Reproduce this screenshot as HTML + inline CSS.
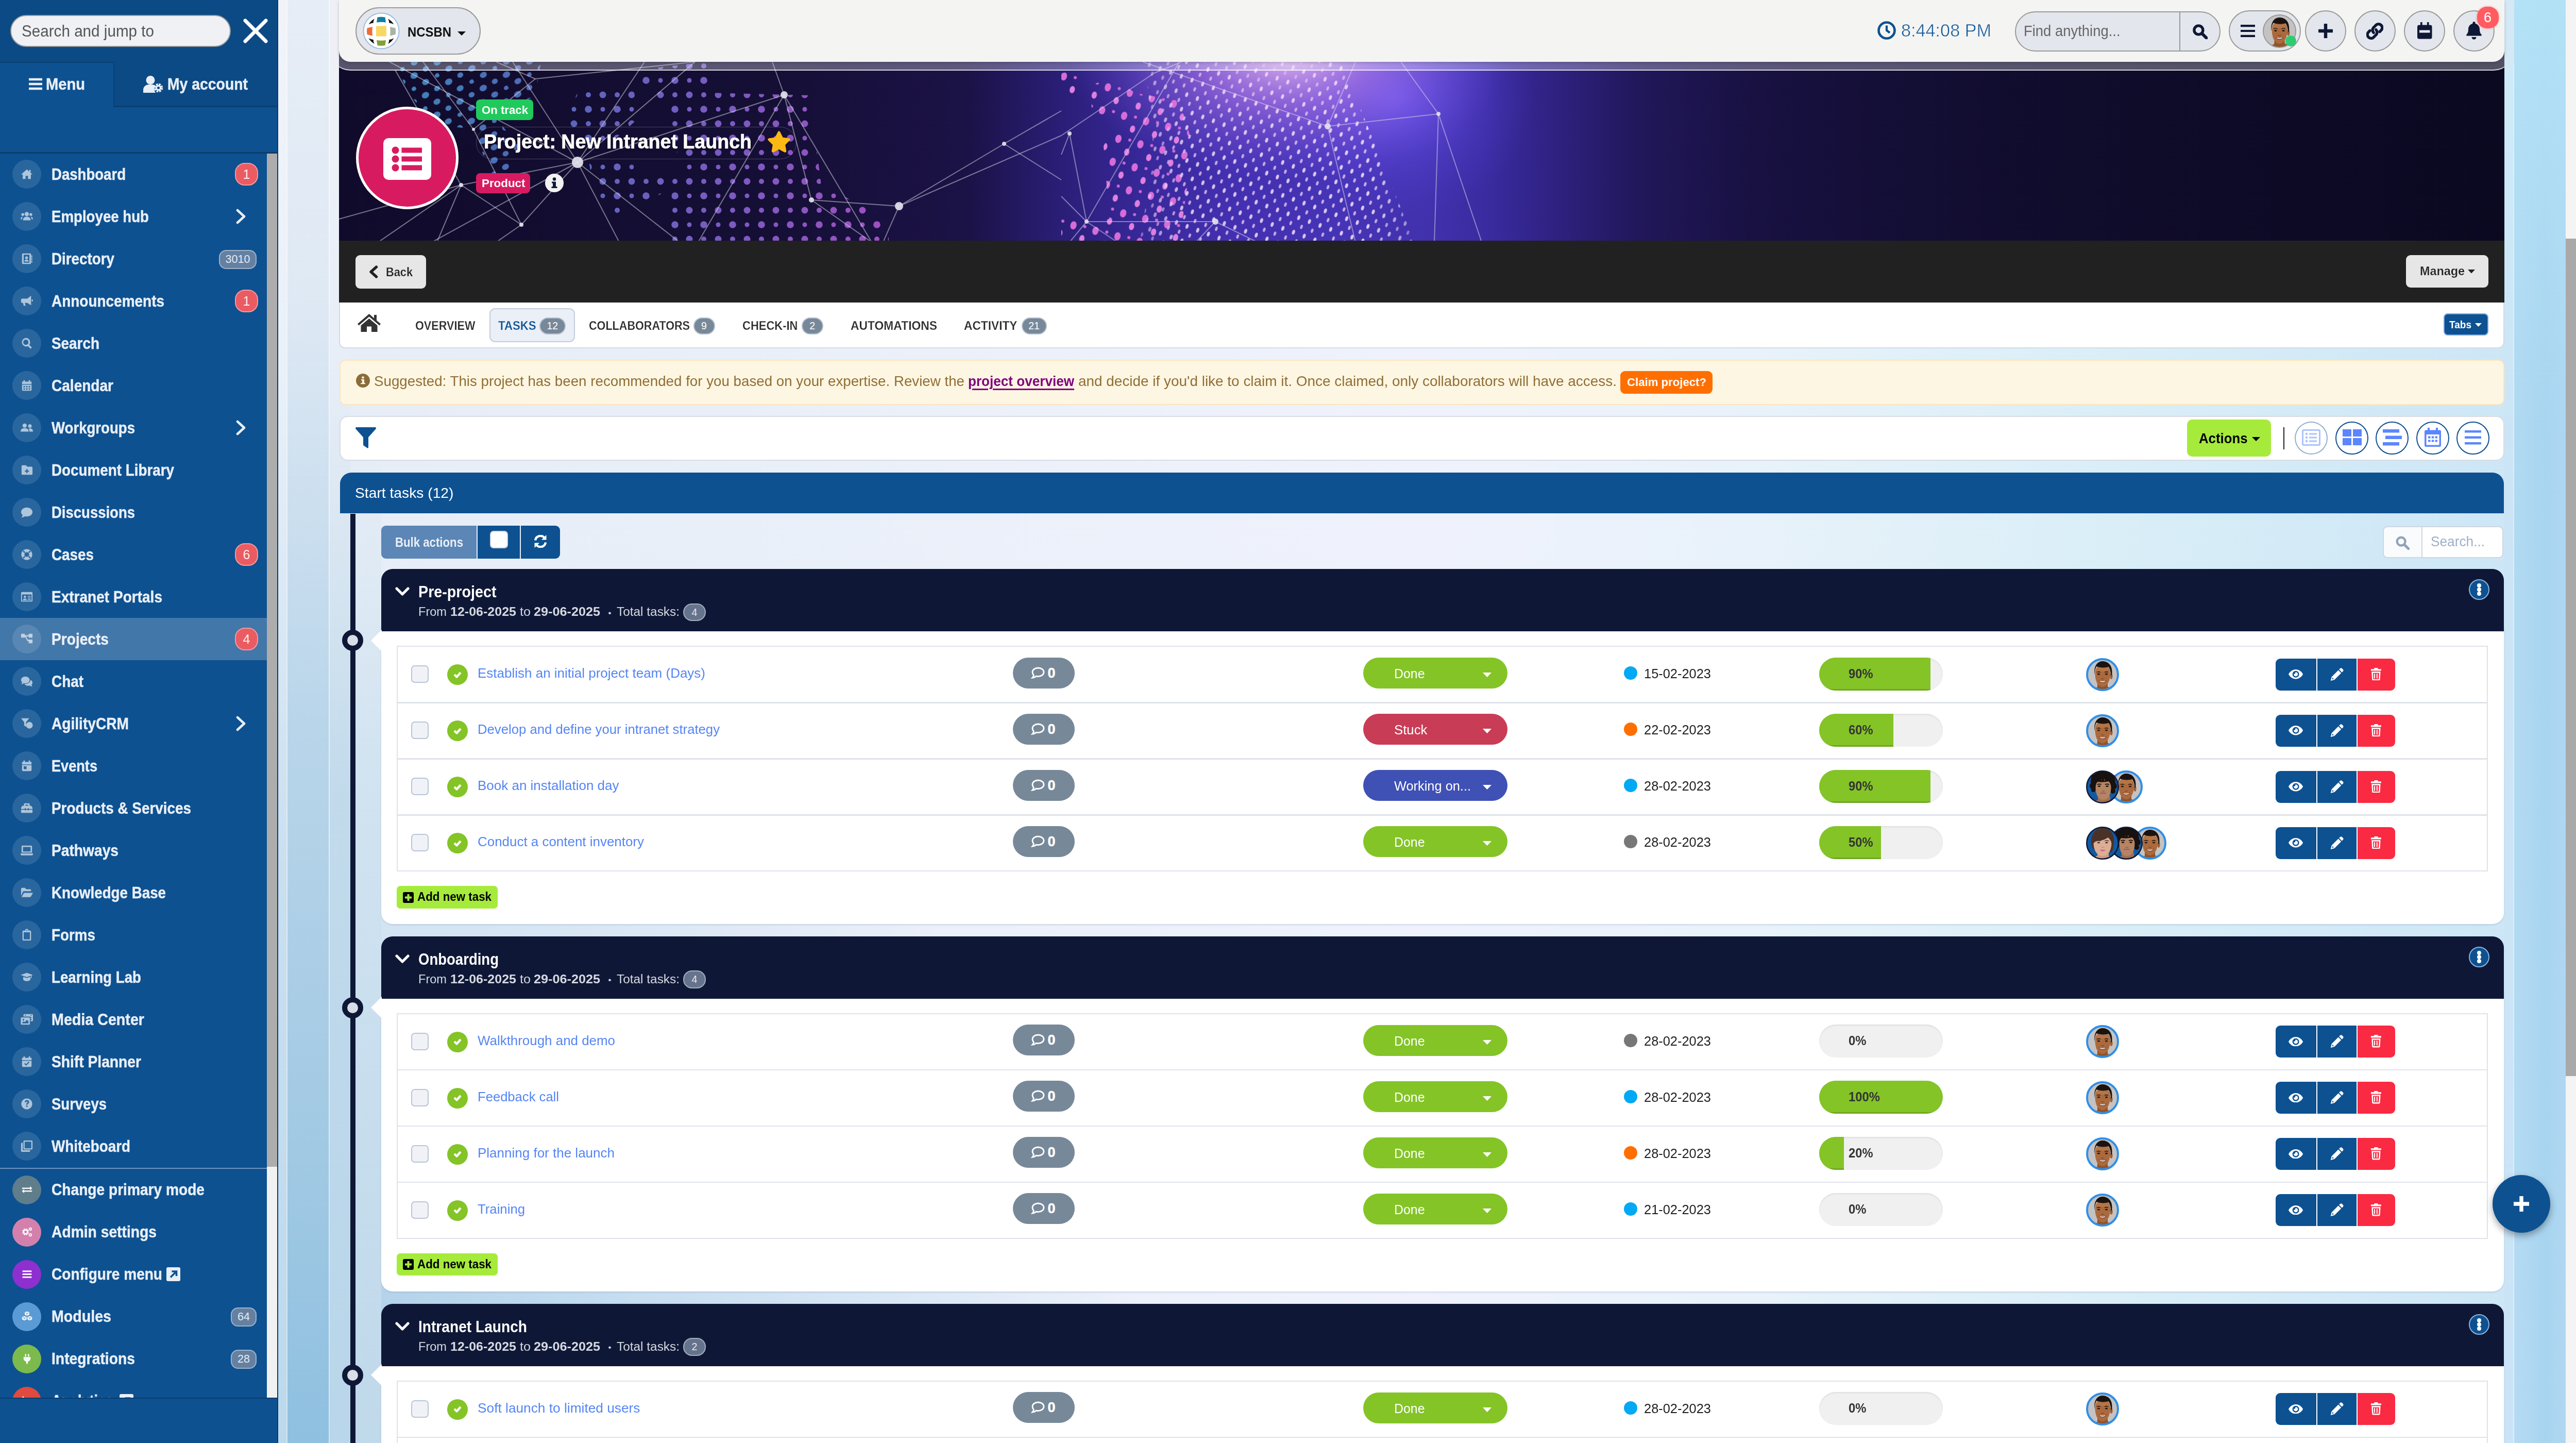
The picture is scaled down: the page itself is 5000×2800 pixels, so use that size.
<!DOCTYPE html>
<html lang="en"><head><meta charset="utf-8"><title>Project: New Intranet Launch</title>
<style>
*{box-sizing:border-box;margin:0;padding:0}
html,body{width:5000px;height:2800px;background:#cfe4f3;font-family:"Liberation Sans",sans-serif}
#root{position:relative;width:5000px;height:2800px;overflow:hidden;transform-origin:0 0}
#root div,#root svg,#root span.t{position:absolute}
span.t{white-space:nowrap;display:block}

</style></head><body>

<div id="root">
<div style="left:540px;top:0px;width:4460px;height:2800px;background:radial-gradient(ellipse 1700px 1500px at 0 100%,rgba(160,200,228,.95) 0,rgba(175,210,235,.6) 45%,rgba(190,215,235,0) 100%),linear-gradient(90deg,#e6edf6 0,#e9eff8 20%,#eff2fc 50%,#e8f2fa 64%,#d9eef7 80%,#cbe5f6 100%);"></div>
<div style="left:540px;top:0px;width:16px;height:2800px;background:linear-gradient(180deg,#f1f3f9 0,#eaf0f8 25%,#c9dff0 60%,#bcd9ec 100%);"></div>
<div style="left:556px;top:0px;width:84px;height:2800px;background:linear-gradient(180deg,#e6edf6 0,#dfe9f4 20%,#b9d5ea 50%,#a5cbe4 75%,#8fc0e0 100%);border-left:2px solid rgba(255,255,255,.6);border-right:2px solid rgba(255,255,255,.6);"></div>
<div style="left:640px;top:0px;width:40px;height:2800px;background:linear-gradient(180deg,#eff1f7 0,#e8eef7 25%,rgba(205,224,238,.9) 45%,rgba(192,217,235,.95) 55%,rgba(185,214,234,1) 100%);"></div>
<div style="left:680px;top:0px;width:60px;height:2800px;background:linear-gradient(180deg,rgba(239,241,247,0) 0,rgba(239,241,247,0) 30%,rgba(207,226,240,.8) 52%,rgba(194,218,235,.9) 100%);"></div>
<div style="left:4861px;top:0px;width:19px;height:2800px;background:linear-gradient(180deg,#cfeaf7 0,#cbe5f6 30%,#cbe3f6 100%);border-right:2px solid rgba(255,255,255,.35);"></div>
<div style="left:4880px;top:0px;width:100px;height:2800px;background:linear-gradient(180deg,rgba(179,226,246,.9) 0,rgba(170,214,240,.4) 30%,rgba(170,214,240,0) 100%),linear-gradient(90deg,#b6dbf3,#a8d4f0 60%,#b0d7f1);"></div>
<div style="left:4980px;top:0px;width:20px;height:2800px;background:#f4f4f4;"></div>
<div style="left:4980px;top:463px;width:20px;height:1625px;background:#a9a9a9;"></div>
<div style="left:0px;top:0px;width:540px;height:2800px;background:#0d5191;"></div>
<div style="left:0px;top:0px;width:540px;height:297px;background:#0b4a85;"></div>
<div style="left:0px;top:206px;width:540px;height:91px;background:#0d5191;"></div>
<div style="left:0px;top:120px;width:222px;height:88px;background:#0d5191;border-top:2px solid #0a3f72;border-right:2px solid #0a3f72;"></div>
<div style="left:221px;top:205px;width:319px;height:2.5px;background:#0a3f72;"></div>
<div style="left:0px;top:295px;width:540px;height:3px;background:#0a3d6e;"></div>
<div style="left:538px;top:0px;width:2px;height:2800px;background:#0a3d6e;"></div>
<div style="left:20px;top:29px;width:428px;height:62px;background:#f0f1f5;border:2px solid #9a9a9a;border-radius:31px;"></div>
<span class="t" style="top:44.5px;font-size:31px;line-height:31px;color:#555;transform:scaleX(0.9560);transform-origin:0 50%;left:42px;">Search and jump to</span>
<svg style="left:472px;top:36px;" width="48" height="48" viewBox="0 0 48 48"><path d="M4 4L44 44M44 4L4 44" stroke="#fff" stroke-width="7" stroke-linecap="round"/></svg>
<svg style="left:56px;top:151px;" width="26" height="24" viewBox="0 0 26 24"><path d="M0 3h26M0 12h26M0 21h26" stroke="#e8eef6" stroke-width="4.4"/></svg>
<span class="t" style="top:148.25px;font-size:30.5px;line-height:30.5px;color:#e8eef6;font-weight:700;transform:scaleX(0.9543);transform-origin:0 50%;left:89px;-webkit-text-stroke:.45px #e8eef6;">Menu</span>
<svg style="left:278px;top:147px;" width="40" height="33" viewBox="0 0 40 33"><circle cx="14" cy="8.5" r="8.5" fill="#e8eef6"/><path d="M0 33v-5c0-7 5-11 11-11h6c3 0 5 1 7 2.5c-3 3-3.5 9 0 13.5z" fill="#e8eef6"/><circle cx="29.5" cy="23.5" r="6.5" fill="none" stroke="#e8eef6" stroke-width="4.5" stroke-dasharray="3.4 1.7"/><circle cx="29.5" cy="23.5" r="4" fill="none" stroke="#e8eef6" stroke-width="3"/></svg>
<span class="t" style="top:148.25px;font-size:30.5px;line-height:30.5px;color:#e8eef6;font-weight:700;transform:scaleX(0.9298);transform-origin:0 50%;left:325px;-webkit-text-stroke:.45px #e8eef6;">My account</span>
<div style="left:518px;top:298px;width:20px;height:2414px;background:#f1f1f1;"></div>
<div style="left:518px;top:298px;width:20px;height:1966px;background:#adadad;"></div>
<div style="left:24px;top:310px;width:56px;height:56px;background:rgba(255,255,255,.12);border-radius:50%;"></div>
<svg style="left:40px;top:326px;" width="24" height="24" viewBox="0 0 26 26"><g fill="#fff" opacity="0.62"><path d="M13 3L1 13.5h3.5V23h6v-6.5h5V23h6v-9.5H25L21 10V4h-3v3.4z"/></g></svg>
<span class="t" style="top:322.75px;font-size:30.5px;line-height:30.5px;color:#e9eff7;font-weight:700;transform:scaleX(0.9039);transform-origin:0 50%;left:100px;-webkit-text-stroke:.45px #e9eff7;">Dashboard</span>
<div style="left:456px;top:316px;width:45px;height:44px;background:#ea5b62;border:2px solid #f19aa0;border-radius:19px;"></div>
<span class="t" style="top:326px;font-size:25px;line-height:25px;color:#fde9ea;left:478.5px;transform:translateX(-50%);">1</span>
<div style="left:24px;top:392px;width:56px;height:56px;background:rgba(255,255,255,.12);border-radius:50%;"></div>
<svg style="left:40px;top:408px;" width="24" height="24" viewBox="0 0 26 26"><g fill="#fff" opacity="0.62"><circle cx="13" cy="8" r="4.5"/><path d="M5 21c0-5 3-7.5 8-7.5s8 2.5 8 7.5z"/><circle cx="4.5" cy="9" r="3"/><circle cx="21.5" cy="9" r="3"/><path d="M0 19c0-3.5 2-5.5 5-5.5-1.5 1.5-2 3.5-2 5.5zM26 19c0-3.5-2-5.5-5-5.5 1.5 1.5 2 3.5 2 5.5z"/></g></svg>
<span class="t" style="top:404.75px;font-size:30.5px;line-height:30.5px;color:#e9eff7;font-weight:700;transform:scaleX(0.9067);transform-origin:0 50%;left:100px;-webkit-text-stroke:.45px #e9eff7;">Employee hub</span>
<svg style="left:457px;top:405px;" width="22" height="30" viewBox="0 0 22 30"><path d="M4 3l13 12L4 27" fill="none" stroke="#e9eff7" stroke-width="4.6" stroke-linecap="round" stroke-linejoin="round"/></svg>
<div style="left:24px;top:474px;width:56px;height:56px;background:rgba(255,255,255,.12);border-radius:50%;"></div>
<svg style="left:40px;top:490px;" width="24" height="24" viewBox="0 0 26 26"><g fill="#fff" opacity="0.62"><path fill-rule="evenodd" d="M5 2h15a2 2 0 012 2v18a2 2 0 01-2 2H5a2 2 0 01-2-2V4a2 2 0 012-2zm1.5 2.5v17h12v-17zM12.5 8a3 3 0 110 6 3 3 0 010-6zm-4.5 11c0-3 2-4 4.5-4s4.5 1 4.5 4z"/><path d="M22.5 6h2v4h-2zM22.5 11.5h2v4h-2zM22.5 17h2v4h-2z"/></g></svg>
<span class="t" style="top:486.75px;font-size:30.5px;line-height:30.5px;color:#e9eff7;font-weight:700;transform:scaleX(0.9110);transform-origin:0 50%;left:100px;-webkit-text-stroke:.45px #e9eff7;">Directory</span>
<div style="left:425px;top:484.5px;width:73px;height:37px;background:#6580a0;border:2px solid #9db2ca;border-radius:14px;"></div>
<span class="t" style="top:492.75px;font-size:21.5px;line-height:21.5px;color:#e4ebf3;left:461.5px;transform:translateX(-50%);">3010</span>
<div style="left:24px;top:556px;width:56px;height:56px;background:rgba(255,255,255,.12);border-radius:50%;"></div>
<svg style="left:40px;top:572px;" width="24" height="24" viewBox="0 0 26 26"><g fill="#fff" opacity="0.62"><path d="M22 2v20l-8-5H9l1.5 6h-4L5 17H3a2 2 0 01-2-2v-5a2 2 0 012-2h11zM23.5 9.5a2.5 2.5 0 010 5z"/></g></svg>
<span class="t" style="top:568.75px;font-size:30.5px;line-height:30.5px;color:#e9eff7;font-weight:700;transform:scaleX(0.9166);transform-origin:0 50%;left:100px;-webkit-text-stroke:.45px #e9eff7;">Announcements</span>
<div style="left:456px;top:562px;width:45px;height:44px;background:#ea5b62;border:2px solid #f19aa0;border-radius:19px;"></div>
<span class="t" style="top:572px;font-size:25px;line-height:25px;color:#fde9ea;left:478.5px;transform:translateX(-50%);">1</span>
<div style="left:24px;top:638px;width:56px;height:56px;background:rgba(255,255,255,.12);border-radius:50%;"></div>
<svg style="left:40px;top:654px;" width="24" height="24" viewBox="0 0 26 26"><g fill="#fff" opacity="0.62"><path fill-rule="evenodd" d="M11 2a9 9 0 017.2 14.4l5.5 5.5-2.8 2.8-5.5-5.5A9 9 0 1111 2zm0 3.5a5.5 5.5 0 100 11 5.5 5.5 0 000-11z"/></g></svg>
<span class="t" style="top:650.75px;font-size:30.5px;line-height:30.5px;color:#e9eff7;font-weight:700;transform:scaleX(0.9141);transform-origin:0 50%;left:100px;-webkit-text-stroke:.45px #e9eff7;">Search</span>
<div style="left:24px;top:720px;width:56px;height:56px;background:rgba(255,255,255,.12);border-radius:50%;"></div>
<svg style="left:40px;top:736px;" width="24" height="24" viewBox="0 0 26 26"><g fill="#fff" opacity="0.62"><path fill-rule="evenodd" d="M3 5h3V2h3v3h8V2h3v3h3v5H3zm0 6.5h20V22a2 2 0 01-2 2H5a2 2 0 01-2-2zm3 2.5v3h3v-3zm5.5 0v3h3v-3zm5.5 0v3h3v-3zM6 19v3h3v-3zm5.5 0v3h3v-3zm5.5 0v3h3v-3z"/></g></svg>
<span class="t" style="top:732.75px;font-size:30.5px;line-height:30.5px;color:#e9eff7;font-weight:700;transform:scaleX(0.9193);transform-origin:0 50%;left:100px;-webkit-text-stroke:.45px #e9eff7;">Calendar</span>
<div style="left:24px;top:802px;width:56px;height:56px;background:rgba(255,255,255,.12);border-radius:50%;"></div>
<svg style="left:40px;top:818px;" width="24" height="24" viewBox="0 0 26 26"><g fill="#fff" opacity="0.62"><circle cx="8.5" cy="8.5" r="4.5"/><path d="M0 21c0-5 3-7 8.5-7s8.5 2 8.5 7z"/><circle cx="19.5" cy="9.5" r="3.7"/><path d="M18.5 21c0-3-.5-4.5-2-6 1-.5 2-.7 3-.7 4 0 6.5 2 6.5 6.7z"/></g></svg>
<span class="t" style="top:814.75px;font-size:30.5px;line-height:30.5px;color:#e9eff7;font-weight:700;transform:scaleX(0.9047);transform-origin:0 50%;left:100px;-webkit-text-stroke:.45px #e9eff7;">Workgroups</span>
<svg style="left:457px;top:815px;" width="22" height="30" viewBox="0 0 22 30"><path d="M4 3l13 12L4 27" fill="none" stroke="#e9eff7" stroke-width="4.6" stroke-linecap="round" stroke-linejoin="round"/></svg>
<div style="left:24px;top:884px;width:56px;height:56px;background:rgba(255,255,255,.12);border-radius:50%;"></div>
<svg style="left:40px;top:900px;" width="24" height="24" viewBox="0 0 26 26"><g fill="#fff" opacity="0.62"><path fill-rule="evenodd" d="M2 5a2 2 0 012-2h7l3 3h9a2 2 0 012 2v13a2 2 0 01-2 2H4a2 2 0 01-2-2zm10 6v3H9v2.5h3v3h2.5v-3h3V14h-3v-3z"/></g></svg>
<span class="t" style="top:896.75px;font-size:30.5px;line-height:30.5px;color:#e9eff7;font-weight:700;transform:scaleX(0.9119);transform-origin:0 50%;left:100px;-webkit-text-stroke:.45px #e9eff7;">Document Library</span>
<div style="left:24px;top:966px;width:56px;height:56px;background:rgba(255,255,255,.12);border-radius:50%;"></div>
<svg style="left:40px;top:982px;" width="24" height="24" viewBox="0 0 26 26"><g fill="#fff" opacity="0.62"><path d="M13 3c6.6 0 12 4.3 12 9.5S19.6 22 13 22c-1.5 0-3-.2-4.3-.6C7 22.8 4.5 24 1.5 24c1.5-1.5 2.5-3.3 2.8-5C2.3 17.3 1 15 1 12.5 1 7.3 6.4 3 13 3z"/></g></svg>
<span class="t" style="top:978.75px;font-size:30.5px;line-height:30.5px;color:#e9eff7;font-weight:700;transform:scaleX(0.9016);transform-origin:0 50%;left:100px;-webkit-text-stroke:.45px #e9eff7;">Discussions</span>
<div style="left:24px;top:1048px;width:56px;height:56px;background:rgba(255,255,255,.12);border-radius:50%;"></div>
<svg style="left:40px;top:1064px;" width="24" height="24" viewBox="0 0 26 26"><g fill="#fff" opacity="0.62"><path fill-rule="evenodd" d="M13 1.5a11.5 11.5 0 110 23 11.5 11.5 0 010-23zm0 6.5a5 5 0 100 10 5 5 0 000-10zM6.5 4.5l3.5 3.5a6 6 0 00-2 2L4.5 6.5zM19.5 4.5l2 2L18 10a6 6 0 00-2-2zM4.5 19.5L8 16a6 6 0 002 2l-3.5 3.5zM21.5 19.5l-2 2L16 18a6 6 0 002-2z" /></g></svg>
<span class="t" style="top:1060.75px;font-size:30.5px;line-height:30.5px;color:#e9eff7;font-weight:700;transform:scaleX(0.9122);transform-origin:0 50%;left:100px;-webkit-text-stroke:.45px #e9eff7;">Cases</span>
<div style="left:456px;top:1054px;width:45px;height:44px;background:#ea5b62;border:2px solid #f19aa0;border-radius:19px;"></div>
<span class="t" style="top:1064px;font-size:25px;line-height:25px;color:#fde9ea;left:478.5px;transform:translateX(-50%);">6</span>
<div style="left:24px;top:1130px;width:56px;height:56px;background:rgba(255,255,255,.12);border-radius:50%;"></div>
<svg style="left:40px;top:1146px;" width="24" height="24" viewBox="0 0 26 26"><g fill="#fff" opacity="0.62"><path fill-rule="evenodd" d="M3 3h20a2 2 0 012 2v16a2 2 0 01-2 2H3a2 2 0 01-2-2V5a2 2 0 012-2zm0 5v13h20V8zm6 2.5a2.5 2.5 0 110 5 2.5 2.5 0 010-5zM5 20c0-2.5 1.5-3.5 4-3.5s4 1 4 3.5zM15 11h6v1.8h-6zm0 3.5h6v1.8h-6zm0 3.5h6v1.8h-6z"/></g></svg>
<span class="t" style="top:1142.75px;font-size:30.5px;line-height:30.5px;color:#e9eff7;font-weight:700;transform:scaleX(0.9191);transform-origin:0 50%;left:100px;-webkit-text-stroke:.45px #e9eff7;">Extranet Portals</span>
<div style="left:0px;top:1199px;width:518px;height:82px;background:rgba(255,255,255,.22);"></div>
<div style="left:24px;top:1212px;width:56px;height:56px;background:rgba(255,255,255,.12);border-radius:50%;"></div>
<svg style="left:40px;top:1228px;" width="24" height="24" viewBox="0 0 26 26"><g fill="#fff" opacity="0.62"><path d="M1 2h8v3h8V2h8v8h-8V7.5h-5.5l4 7H17V14h8v8h-8v-4.5h-2.5L9.5 8.5V10H1z"/></g></svg>
<span class="t" style="top:1224.75px;font-size:30.5px;line-height:30.5px;color:#e9eff7;font-weight:700;transform:scaleX(0.9221);transform-origin:0 50%;left:100px;-webkit-text-stroke:.45px #e9eff7;">Projects</span>
<div style="left:456px;top:1218px;width:45px;height:44px;background:#ea5b62;border:2px solid #f19aa0;border-radius:19px;"></div>
<span class="t" style="top:1228px;font-size:25px;line-height:25px;color:#fde9ea;left:478.5px;transform:translateX(-50%);">4</span>
<div style="left:24px;top:1294px;width:56px;height:56px;background:rgba(255,255,255,.12);border-radius:50%;"></div>
<svg style="left:40px;top:1310px;" width="24" height="24" viewBox="0 0 26 26"><g fill="#fff" opacity="0.62"><path d="M10 3c5 0 9 3.2 9 7.2s-4 7.2-9 7.2c-1 0-2-.1-3-.4C5.5 18.2 3.5 19 1 19c1.3-1.2 2-2.5 2.3-3.8C1.8 13.8 1 12 1 10.2 1 6.2 5 3 10 3z"/><path d="M21 10c2.5 1.2 4 3.3 4 5.7 0 1.8-.8 3.4-2.2 4.7.3 1.3 1 2.5 2.2 3.6-2.5 0-4.5-.7-6-2-1 .3-2 .4-3 .4-3.5 0-6.5-1.5-8-3.8 6.5.4 12.5-3 13-8.6z"/></g></svg>
<span class="t" style="top:1306.75px;font-size:30.5px;line-height:30.5px;color:#e9eff7;font-weight:700;transform:scaleX(0.9147);transform-origin:0 50%;left:100px;-webkit-text-stroke:.45px #e9eff7;">Chat</span>
<div style="left:24px;top:1376px;width:56px;height:56px;background:rgba(255,255,255,.12);border-radius:50%;"></div>
<svg style="left:40px;top:1392px;" width="24" height="24" viewBox="0 0 26 26"><g fill="#fff" opacity="0.62"><path d="M1 2h17l-6.5 8v10l-4-3v-7z"/><circle cx="18.5" cy="16.5" r="7"/></g></svg>
<span class="t" style="top:1388.75px;font-size:30.5px;line-height:30.5px;color:#e9eff7;font-weight:700;transform:scaleX(0.9221);transform-origin:0 50%;left:100px;-webkit-text-stroke:.45px #e9eff7;">AgilityCRM</span>
<svg style="left:457px;top:1389px;" width="22" height="30" viewBox="0 0 22 30"><path d="M4 3l13 12L4 27" fill="none" stroke="#e9eff7" stroke-width="4.6" stroke-linecap="round" stroke-linejoin="round"/></svg>
<div style="left:24px;top:1458px;width:56px;height:56px;background:rgba(255,255,255,.12);border-radius:50%;"></div>
<svg style="left:40px;top:1474px;" width="24" height="24" viewBox="0 0 26 26"><g fill="#fff" opacity="0.62"><path fill-rule="evenodd" d="M3 5h3V2h3v3h8V2h3v3h3v5H3zm0 6.5h20V22a2 2 0 01-2 2H5a2 2 0 01-2-2zm3.5 2.5v6h6v-6z"/></g></svg>
<span class="t" style="top:1470.75px;font-size:30.5px;line-height:30.5px;color:#e9eff7;font-weight:700;transform:scaleX(0.8897);transform-origin:0 50%;left:100px;-webkit-text-stroke:.45px #e9eff7;">Events</span>
<div style="left:24px;top:1540px;width:56px;height:56px;background:rgba(255,255,255,.12);border-radius:50%;"></div>
<svg style="left:40px;top:1556px;" width="24" height="24" viewBox="0 0 26 26"><g fill="#fff" opacity="0.62"><path fill-rule="evenodd" d="M9 3h8a2 2 0 012 2v3h3l3 4v3h-8v-2h-2v2h-4v-2H9v2H1v-3l3-4h3V5a2 2 0 012-2zm1 3v2h6V6zM1 16.5h8V18h2v-1.5h4V18h2v-1.5h8V22a1 1 0 01-1 1H2a1 1 0 01-1-1z"/></g></svg>
<span class="t" style="top:1552.75px;font-size:30.5px;line-height:30.5px;color:#e9eff7;font-weight:700;transform:scaleX(0.9135);transform-origin:0 50%;left:100px;-webkit-text-stroke:.45px #e9eff7;">Products &amp; Services</span>
<div style="left:24px;top:1622px;width:56px;height:56px;background:rgba(255,255,255,.12);border-radius:50%;"></div>
<svg style="left:40px;top:1638px;" width="24" height="24" viewBox="0 0 26 26"><g fill="#fff" opacity="0.62"><path fill-rule="evenodd" d="M4 3h18a2 2 0 012 2v13H2V5a2 2 0 012-2zm1 3v9.5h16V6zM0 19.5h26V21a2.5 2.5 0 01-2.5 2.5h-21A2.5 2.5 0 010 21z"/></g></svg>
<span class="t" style="top:1634.75px;font-size:30.5px;line-height:30.5px;color:#e9eff7;font-weight:700;transform:scaleX(0.9238);transform-origin:0 50%;left:100px;-webkit-text-stroke:.45px #e9eff7;">Pathways</span>
<div style="left:24px;top:1704px;width:56px;height:56px;background:rgba(255,255,255,.12);border-radius:50%;"></div>
<svg style="left:40px;top:1720px;" width="24" height="24" viewBox="0 0 26 26"><g fill="#fff" opacity="0.62"><path d="M1 20V5a2 2 0 012-2h6l3 3h8a2 2 0 012 2v2H7.5a3 3 0 00-2.6 1.5zM2 22.5l4.5-8A2 2 0 018.2 13.5H26l-4.5 8a2 2 0 01-1.7 1z"/></g></svg>
<span class="t" style="top:1716.75px;font-size:30.5px;line-height:30.5px;color:#e9eff7;font-weight:700;transform:scaleX(0.9096);transform-origin:0 50%;left:100px;-webkit-text-stroke:.45px #e9eff7;">Knowledge Base</span>
<div style="left:24px;top:1786px;width:56px;height:56px;background:rgba(255,255,255,.12);border-radius:50%;"></div>
<svg style="left:40px;top:1802px;" width="24" height="24" viewBox="0 0 26 26"><g fill="#fff" opacity="0.62"><path fill-rule="evenodd" d="M6 4h3.5a3.5 3.5 0 017 0H20a2 2 0 012 2v17a2 2 0 01-2 2H6a2 2 0 01-2-2V6a2 2 0 012-2zm7-1.2a1.2 1.2 0 100 2.4 1.2 1.2 0 000-2.4zM6.5 7.5v15h13v-15z"/></g></svg>
<span class="t" style="top:1798.75px;font-size:30.5px;line-height:30.5px;color:#e9eff7;font-weight:700;transform:scaleX(0.9118);transform-origin:0 50%;left:100px;-webkit-text-stroke:.45px #e9eff7;">Forms</span>
<div style="left:24px;top:1868px;width:56px;height:56px;background:rgba(255,255,255,.12);border-radius:50%;"></div>
<svg style="left:40px;top:1884px;" width="24" height="24" viewBox="0 0 26 26"><g fill="#fff" opacity="0.62"><path d="M13 4l13 4.5-3 1v6h-1.5v-5.5L13 13 0 8.5zM5.5 12.5L13 15l7.5-2.5V18c0 2-3.5 3.5-7.5 3.5S5.5 20 5.5 18z"/></g></svg>
<span class="t" style="top:1880.75px;font-size:30.5px;line-height:30.5px;color:#e9eff7;font-weight:700;transform:scaleX(0.9086);transform-origin:0 50%;left:100px;-webkit-text-stroke:.45px #e9eff7;">Learning Lab</span>
<div style="left:24px;top:1950px;width:56px;height:56px;background:rgba(255,255,255,.12);border-radius:50%;"></div>
<svg style="left:40px;top:1966px;" width="24" height="24" viewBox="0 0 26 26"><g fill="#fff" opacity="0.62"><path fill-rule="evenodd" d="M8 2h16a2 2 0 012 2v11a2 2 0 01-2 2h-3V9a2 2 0 00-2-2H6V4a2 2 0 012-2zm1 1.5v2h2v-2zm12 0v2h2v-2zm0 4.5v2h2V8zm0 4.5v2h2v-2zM2 9h16a1.5 1.5 0 011.5 1.5v12A1.5 1.5 0 0118 24H2a1.5 1.5 0 01-1.5-1.5v-12A1.5 1.5 0 012 9zm1.5 12.5h13V17l-3-3-5 5-2-2-3 3zM6 12a1.8 1.8 0 100 3.6A1.8 1.8 0 006 12z"/></g></svg>
<span class="t" style="top:1962.75px;font-size:30.5px;line-height:30.5px;color:#e9eff7;font-weight:700;transform:scaleX(0.9398);transform-origin:0 50%;left:100px;-webkit-text-stroke:.45px #e9eff7;">Media Center</span>
<div style="left:24px;top:2032px;width:56px;height:56px;background:rgba(255,255,255,.12);border-radius:50%;"></div>
<svg style="left:40px;top:2048px;" width="24" height="24" viewBox="0 0 26 26"><g fill="#fff" opacity="0.62"><path fill-rule="evenodd" d="M3 5h3V2h3v3h8V2h3v3h3v5H3zm0 6.5h20V22a2 2 0 01-2 2H5a2 2 0 01-2-2zm15.5 3L17 13l-5.5 5.5L9 16l-1.5 1.5 4 4z"/></g></svg>
<span class="t" style="top:2044.75px;font-size:30.5px;line-height:30.5px;color:#e9eff7;font-weight:700;transform:scaleX(0.9250);transform-origin:0 50%;left:100px;-webkit-text-stroke:.45px #e9eff7;">Shift Planner</span>
<div style="left:24px;top:2114px;width:56px;height:56px;background:rgba(255,255,255,.12);border-radius:50%;"></div>
<svg style="left:40px;top:2130px;" width="24" height="24" viewBox="0 0 26 26"><g fill="#fff" opacity="0.62"><path fill-rule="evenodd" d="M13 1.5a11.5 11.5 0 110 23 11.5 11.5 0 010-23zm-4.3 8h3c0-1 .6-1.5 1.5-1.5s1.5.5 1.5 1.3c0 1.7-3 2-3 5.2h3c0-2 3.3-2.5 3.3-5.5 0-2.5-2-4-4.8-4-2.7 0-4.5 1.7-4.5 4.5zm3 6.8v3h3v-3z"/></g></svg>
<span class="t" style="top:2126.75px;font-size:30.5px;line-height:30.5px;color:#e9eff7;font-weight:700;transform:scaleX(0.9014);transform-origin:0 50%;left:100px;-webkit-text-stroke:.45px #e9eff7;">Surveys</span>
<div style="left:24px;top:2196px;width:56px;height:56px;background:rgba(255,255,255,.12);border-radius:50%;"></div>
<svg style="left:40px;top:2212px;" width="24" height="24" viewBox="0 0 26 26"><g fill="#fff" opacity="0.62"><path fill-rule="evenodd" d="M8 1h15a2 2 0 012 2v15a2 2 0 01-2 2H8a2 2 0 01-2-2V3a2 2 0 012-2zm.5 2.5v14h14v-14zM1 8a2 2 0 012-2h1.5v15.5H20V23a2 2 0 01-2 2H3a2 2 0 01-2-2z"/></g></svg>
<span class="t" style="top:2208.75px;font-size:30.5px;line-height:30.5px;color:#e9eff7;font-weight:700;transform:scaleX(0.9121);transform-origin:0 50%;left:100px;-webkit-text-stroke:.45px #e9eff7;">Whiteboard</span>
<div style="left:0px;top:2265.5px;width:518px;height:2.5px;background:#6e93bf;"></div>
<div style="left:24px;top:2280.5px;width:56px;height:56px;background:#607d8b;border-radius:50%;"></div>
<svg style="left:41.5px;top:2298px;" width="21" height="21" viewBox="0 0 26 26"><g fill="#fff" opacity="0.95"><path d="M1 8h19V4.5L25.5 9.5 20 14.5V11H1zM25 18H6v3.5L.5 16.5 6 11.5V15h19z"/></g></svg>
<span class="t" style="top:2293.25px;font-size:30.5px;line-height:30.5px;color:#e9eff7;font-weight:700;transform:scaleX(0.9223);transform-origin:0 50%;left:100px;-webkit-text-stroke:.45px #e9eff7;">Change primary mode</span>
<div style="left:24px;top:2362.5px;width:56px;height:56px;background:#d381ac;border-radius:50%;"></div>
<svg style="left:41.5px;top:2380px;" width="21" height="21" viewBox="0 0 26 26"><g fill="#fff" opacity="0.95"><path fill-rule="evenodd" d="M9.5 6l1.5.3.8-1.8 2.4 1-.6 1.9 1.2 1.2 1.9-.6 1 2.4-1.8.8.3 1.5-.3 1.5 1.8.8-1 2.4-1.9-.6-1.2 1.2.6 1.9-2.4 1-.8-1.8-1.5.3-1.5-.3-.8 1.8-2.4-1 .6-1.9-1.2-1.2-1.9.6-1-2.4 1.8-.8L2.8 12.7l.3-1.5-1.8-.8 1-2.4 1.9.6 1.2-1.2-.6-1.9 2.4-1 .8 1.8zm0 3.5a3.2 3.2 0 100 6.4 3.2 3.2 0 000-6.4z"/><circle cx="21" cy="6" r="3.8"/><circle cx="21" cy="20" r="3.8"/><circle cx="21" cy="6" r="1.5" fill="#d381ac"/><circle cx="21" cy="20" r="1.5" fill="#d381ac"/></g></svg>
<span class="t" style="top:2375.25px;font-size:30.5px;line-height:30.5px;color:#e9eff7;font-weight:700;transform:scaleX(0.9260);transform-origin:0 50%;left:100px;-webkit-text-stroke:.45px #e9eff7;">Admin settings</span>
<div style="left:24px;top:2444.5px;width:56px;height:56px;background:#8e2fd0;border-radius:50%;"></div>
<svg style="left:41.5px;top:2462px;" width="21" height="21" viewBox="0 0 26 26"><g fill="#fff" opacity="0.95"><path d="M2 4h22v3.6H2zM2 11.2h22v3.6H2zM2 18.4h22V22H2z"/></g></svg>
<span class="t" style="top:2457.25px;font-size:30.5px;line-height:30.5px;color:#e9eff7;font-weight:700;transform:scaleX(0.9194);transform-origin:0 50%;left:100px;-webkit-text-stroke:.45px #e9eff7;">Configure menu</span>
<div style="left:24px;top:2526.5px;width:56px;height:56px;background:#5b9bd5;border-radius:50%;"></div>
<svg style="left:41.5px;top:2544px;" width="21" height="21" viewBox="0 0 26 26"><g fill="#fff" opacity="0.95"><path d="M13 1l5.5 2.2v5.6L13 11 7.5 8.8V3.2zM6.5 12l5.5 2.2v6L6.5 22.5 1 20.2v-6zM19.5 12l5.5 2.2v6l-5.5 2.3-5.5-2.3v-6z"/><path d="M13 5.8l3.5-1.4M13 5.8L9.5 4.4M13 5.8V9M6.5 16.8l3.5-1.4M6.5 16.8L3 15.4M6.5 16.8V20M19.5 16.8l3.5-1.4M19.5 16.8L16 15.4M19.5 16.8V20" stroke="#5b9bd5" stroke-width="1.3" fill="none"/></g></svg>
<span class="t" style="top:2539.25px;font-size:30.5px;line-height:30.5px;color:#e9eff7;font-weight:700;transform:scaleX(0.9377);transform-origin:0 50%;left:100px;-webkit-text-stroke:.45px #e9eff7;">Modules</span>
<div style="left:448px;top:2537px;width:50px;height:37px;background:#6580a0;border:2px solid #9db2ca;border-radius:14px;"></div>
<span class="t" style="top:2545.25px;font-size:21.5px;line-height:21.5px;color:#e4ebf3;left:473px;transform:translateX(-50%);">64</span>
<div style="left:24px;top:2608.5px;width:56px;height:56px;background:#7cba4e;border-radius:50%;"></div>
<svg style="left:41.5px;top:2626px;" width="21" height="21" viewBox="0 0 26 26"><g fill="#fff" opacity="0.95"><path d="M8 1.5h3V8H8zM15 1.5h3V8h-3zM4.5 9h17v3c0 4-2.5 7-6.5 7.8V25h-4v-5.2C7 19 4.5 16 4.5 12z"/></g></svg>
<span class="t" style="top:2621.25px;font-size:30.5px;line-height:30.5px;color:#e9eff7;font-weight:700;transform:scaleX(0.9281);transform-origin:0 50%;left:100px;-webkit-text-stroke:.45px #e9eff7;">Integrations</span>
<div style="left:448px;top:2619px;width:50px;height:37px;background:#6580a0;border:2px solid #9db2ca;border-radius:14px;"></div>
<span class="t" style="top:2627.25px;font-size:21.5px;line-height:21.5px;color:#e4ebf3;left:473px;transform:translateX(-50%);">28</span>
<div style="left:24px;top:2690.5px;width:56px;height:56px;background:#e04a3f;border-radius:50%;"></div>
<svg style="left:41.5px;top:2708px;" width="21" height="21" viewBox="0 0 26 26"><g fill="#fff" opacity="0.95"><path d="M2 2h3v19h19v3H2zM8 12h3v7H8zM13 7h3v12h-3zM18 10h3v9h-3z"/></g></svg>
<span class="t" style="top:2703.25px;font-size:30.5px;line-height:30.5px;color:#e9eff7;font-weight:700;transform:scaleX(0.8848);transform-origin:0 50%;left:100px;-webkit-text-stroke:.45px #e9eff7;">Analytics</span>
<svg style="left:323px;top:2459px;" width="27" height="27" viewBox="0 0 27 27"><rect x="0" y="0" width="27" height="27" rx="3" fill="#e9eff7"/><path d="M8 19.5L18 9.5M10.5 8h9v9" stroke="#0d5191" stroke-width="3.6" fill="none"/></svg>
<svg style="left:232px;top:2705px;" width="27" height="27" viewBox="0 0 27 27"><rect x="0" y="0" width="27" height="27" rx="3" fill="#e9eff7"/><path d="M8 19.5L18 9.5M10.5 8h9v9" stroke="#0d5191" stroke-width="3.6" fill="none"/></svg>
<div style="left:0px;top:2712px;width:538px;height:88px;background:#0d5191;border-top:2px solid #0a3d6e;"></div>
<svg style="left:658px;top:120px;" width="4203" height="347" viewBox="0 0 4203 347"><defs><linearGradient id="bg0" x1="0" x2="1" y1="0" y2="0"><stop offset="0" stop-color="#100b2b"/><stop offset=".2" stop-color="#150f36"/><stop offset=".29" stop-color="#1b1246"/><stop offset=".334" stop-color="#2a1e78"/><stop offset=".372" stop-color="#38289a"/><stop offset=".411" stop-color="#4330b0"/><stop offset=".463" stop-color="#4534b6"/><stop offset=".504" stop-color="#4131ac"/><stop offset=".53" stop-color="#3a2ba0"/><stop offset=".562" stop-color="#2e2180"/><stop offset=".6" stop-color="#21175a"/><stop offset=".652" stop-color="#181142"/><stop offset=".726" stop-color="#130e34"/><stop offset=".795" stop-color="#100c2c"/><stop offset=".9" stop-color="#0d0a26"/><stop offset="1" stop-color="#0a0920"/></linearGradient><radialGradient id="glow" cx="0" cy="0" r="1" gradientUnits="userSpaceOnUse" gradientTransform="translate(1840 -20) scale(430 250)"><stop offset="0" stop-color="#f0c4f4" stop-opacity=".95"/><stop offset=".4" stop-color="#b07ae8" stop-opacity=".65"/><stop offset="1" stop-color="#6a4ad8" stop-opacity="0"/></radialGradient><radialGradient id="glow2" cx="0" cy="0" r="1" gradientUnits="userSpaceOnUse" gradientTransform="translate(2050 70) scale(270 240)"><stop offset="0" stop-color="#6a55f0" stop-opacity=".95"/><stop offset="1" stop-color="#4a36c0" stop-opacity="0"/></radialGradient><linearGradient id="dcol" x1="0" x2="1055" y1="0" y2="0" gradientUnits="userSpaceOnUse"><stop offset=".1" stop-color="#4aa6dc"/><stop offset=".3" stop-color="#5a86d8"/><stop offset=".5" stop-color="#7a78e0"/><stop offset=".75" stop-color="#9a6ce4"/><stop offset="1" stop-color="#c060e0"/></linearGradient><pattern id="dp" width="56" height="56" patternUnits="userSpaceOnUse"><circle cx="8" cy="8" r="6.5" fill="#fff"/><circle cx="36" cy="8" r="5" fill="#fff"/><circle cx="8" cy="36" r="4.5" fill="#fff"/><circle cx="36" cy="36" r="6.8" fill="#fff"/></pattern><pattern id="db" width="52" height="44" patternUnits="userSpaceOnUse" patternTransform="rotate(-30)"><ellipse cx="9" cy="8" rx="7.5" ry="6" fill="#fff"/><ellipse cx="35" cy="8" rx="6" ry="5" fill="#fff"/><ellipse cx="22" cy="30" rx="7" ry="5.5" fill="#fff"/><ellipse cx="48" cy="30" rx="5" ry="4" fill="#fff"/></pattern><pattern id="dk" width="44" height="46" patternUnits="userSpaceOnUse" patternTransform="rotate(14)"><ellipse cx="8" cy="9" rx="6" ry="8" fill="#e070dc"/><ellipse cx="30" cy="30" rx="5" ry="7" fill="#e884e4"/><circle cx="30" cy="6" r="3" fill="#d868d8"/></pattern><pattern id="dw" width="22" height="30" patternUnits="userSpaceOnUse" patternTransform="rotate(20)"><ellipse cx="6" cy="7" rx="2.8" ry="4.8" fill="#e9d2f6"/><ellipse cx="17" cy="22" rx="2.4" ry="4.2" fill="#d4b2ee"/></pattern><linearGradient id="fade" x1="1500" x2="2090" y1="0" y2="0" gradientUnits="userSpaceOnUse"><stop offset="0" stop-color="#fff" stop-opacity=".25"/><stop offset=".25" stop-color="#fff" stop-opacity=".9"/><stop offset=".85" stop-color="#fff" stop-opacity=".95"/><stop offset="1" stop-color="#fff" stop-opacity=".5"/></linearGradient><mask id="mk1"><path fill="url(#db)" d="M109 0L392 0L381 65L305 109L348 163L327 229L294 218L261 131L180 120L131 54z"/><path fill="url(#dp)" d="M463 60L571 49L582 109L539 147L479 163L441 109zM484 185L571 190L577 261L544 299L495 261zM577 16L713 0L718 60L914 65L936 239L1067 305L1067 350L631 350L648 245L571 283L577 229L664 212L637 82L582 49z"/></mask><mask id="mk2"><rect width="4203" height="347" fill="url(#fade)"/></mask></defs><rect width="4203" height="347" fill="url(#bg0)"/><rect width="4203" height="347" fill="url(#glow2)"/><rect width="4203" height="347" fill="url(#glow)"/><rect width="1100" height="347" fill="url(#dcol)" mask="url(#mk1)" opacity=".8"/><path fill="url(#dk)" opacity=".95" d="M1402 22L1435 16L1446 71L1402 65zM1456 44L1511 33L1544 60L1631 76L1658 163L1631 350L1402 350L1402 305L1495 305L1484 163L1516 109L1462 98z"/><g mask="url(#mk2)"><path fill="url(#dw)" d="M1565 0L1946 0L2088 350L1554 350L1582 180z"/></g><path d="M463 195L864 64" stroke="#dddbe9" stroke-opacity=".5" stroke-width="2"/><path d="M463 195L691 0" stroke="#dddbe9" stroke-opacity=".5" stroke-width="2"/><path d="M463 195L593 0" stroke="#dddbe9" stroke-opacity=".5" stroke-width="2"/><path d="M463 195L98 0" stroke="#dddbe9" stroke-opacity=".5" stroke-width="2"/><path d="M463 195L237 239" stroke="#dddbe9" stroke-opacity=".5" stroke-width="2"/><path d="M463 195L354 316" stroke="#dddbe9" stroke-opacity=".5" stroke-width="2"/><path d="M463 195L544 350" stroke="#dddbe9" stroke-opacity=".5" stroke-width="2"/><path d="M463 195L661 350" stroke="#dddbe9" stroke-opacity=".5" stroke-width="2"/><path d="M463 195L337 0" stroke="#dddbe9" stroke-opacity=".5" stroke-width="2"/><path d="M463 195L180 350" stroke="#dddbe9" stroke-opacity=".5" stroke-width="2"/><path d="M864 64L917 268" stroke="#dddbe9" stroke-opacity=".5" stroke-width="2"/><path d="M864 64L841 0" stroke="#dddbe9" stroke-opacity=".5" stroke-width="2"/><path d="M864 64L1034 350" stroke="#dddbe9" stroke-opacity=".5" stroke-width="2"/><path d="M917 268L1087 280" stroke="#dddbe9" stroke-opacity=".5" stroke-width="2"/><path d="M1087 280L1291 159" stroke="#dddbe9" stroke-opacity=".5" stroke-width="2"/><path d="M1087 280L1402 143" stroke="#dddbe9" stroke-opacity=".5" stroke-width="2"/><path d="M1087 280L1056 350" stroke="#dddbe9" stroke-opacity=".5" stroke-width="2"/><path d="M917 268L1034 350" stroke="#dddbe9" stroke-opacity=".5" stroke-width="2"/><path d="M1291 159L1402 95" stroke="#dddbe9" stroke-opacity=".5" stroke-width="2"/><path d="M1291 159L1402 229" stroke="#dddbe9" stroke-opacity=".5" stroke-width="2"/><path d="M237 239L0 305" stroke="#dddbe9" stroke-opacity=".5" stroke-width="2"/><path d="M237 239L109 16" stroke="#dddbe9" stroke-opacity=".5" stroke-width="2"/><path d="M237 239L354 316" stroke="#dddbe9" stroke-opacity=".5" stroke-width="2"/><path d="M354 316L305 350" stroke="#dddbe9" stroke-opacity=".5" stroke-width="2"/><path d="M237 239L190 350" stroke="#dddbe9" stroke-opacity=".5" stroke-width="2"/><path d="M354 316L261 131" stroke="#dddbe9" stroke-opacity=".5" stroke-width="2"/><path d="M261 131L163 0" stroke="#dddbe9" stroke-opacity=".5" stroke-width="2"/><path d="M261 131L381 33" stroke="#dddbe9" stroke-opacity=".5" stroke-width="2"/><path d="M381 33L691 0" stroke="#dddbe9" stroke-opacity=".5" stroke-width="2"/><path d="M381 33L305 0" stroke="#dddbe9" stroke-opacity=".5" stroke-width="2"/><path d="M237 239L76 350" stroke="#dddbe9" stroke-opacity=".5" stroke-width="2"/><path d="M864 64L697 350" stroke="#dddbe9" stroke-opacity=".5" stroke-width="2"/><path d="M1402 143L1582 22" stroke="#ddd8ee" stroke-opacity=".5" stroke-width="2"/><path d="M1582 22L1636 0" stroke="#ddd8ee" stroke-opacity=".5" stroke-width="2"/><path d="M1418 139L1451 310" stroke="#ddd8ee" stroke-opacity=".5" stroke-width="2"/><path d="M1451 310L1701 310" stroke="#ddd8ee" stroke-opacity=".5" stroke-width="2"/><path d="M1701 310L1783 350" stroke="#ddd8ee" stroke-opacity=".5" stroke-width="2"/><path d="M1451 310L1402 261" stroke="#ddd8ee" stroke-opacity=".5" stroke-width="2"/><path d="M1701 310L1663 350" stroke="#ddd8ee" stroke-opacity=".5" stroke-width="2"/><path d="M1560 0L1919 125" stroke="#ddd8ee" stroke-opacity=".5" stroke-width="2"/><path d="M1919 125L2134 101" stroke="#ddd8ee" stroke-opacity=".5" stroke-width="2"/><path d="M2134 101L2218 350" stroke="#ddd8ee" stroke-opacity=".5" stroke-width="2"/><path d="M2134 101L2126 350" stroke="#ddd8ee" stroke-opacity=".5" stroke-width="2"/><path d="M1919 125L1973 0" stroke="#ddd8ee" stroke-opacity=".5" stroke-width="2"/><path d="M1919 125L1973 350" stroke="#ddd8ee" stroke-opacity=".5" stroke-width="2"/><path d="M2134 101L2061 0" stroke="#ddd8ee" stroke-opacity=".5" stroke-width="2"/><path d="M1631 0L1451 310" stroke="#ddd8ee" stroke-opacity=".5" stroke-width="2"/><path d="M1451 310L1511 350" stroke="#ddd8ee" stroke-opacity=".5" stroke-width="2"/><path d="M1418 139L1402 180" stroke="#ddd8ee" stroke-opacity=".5" stroke-width="2"/><path d="M1451 310L1418 350" stroke="#ddd8ee" stroke-opacity=".5" stroke-width="2"/><circle cx="463" cy="195" r="11" fill="#e4e2ec" fill-opacity=".92"/><circle cx="864" cy="64" r="7" fill="#e4e2ec" fill-opacity=".92"/><circle cx="1087" cy="280" r="8" fill="#e4e2ec" fill-opacity=".92"/><circle cx="917" cy="268" r="5" fill="#e4e2ec" fill-opacity=".92"/><circle cx="1291" cy="159" r="4" fill="#e4e2ec" fill-opacity=".92"/><circle cx="237" cy="239" r="4" fill="#e4e2ec" fill-opacity=".92"/><circle cx="354" cy="316" r="4" fill="#e4e2ec" fill-opacity=".92"/><circle cx="261" cy="131" r="3" fill="#e4e2ec" fill-opacity=".92"/><circle cx="1418" cy="139" r="4" fill="#e4e2ec" fill-opacity=".9"/><circle cx="1451" cy="310" r="4" fill="#e4e2ec" fill-opacity=".9"/><circle cx="1701" cy="310" r="6" fill="#e4e2ec" fill-opacity=".9"/><circle cx="1919" cy="125" r="6" fill="#e4e2ec" fill-opacity=".9"/><circle cx="2134" cy="101" r="4" fill="#e4e2ec" fill-opacity=".9"/></svg>
<div style="left:658px;top:92px;width:40px;height:30px;background:#100b2b;"></div>
<div style="left:4821px;top:92px;width:40px;height:30px;background:#0b0a25;"></div>
<div style="left:640px;top:0px;width:4240px;height:137px;background:rgba(235,235,245,.32);border-bottom:2px solid rgba(255,255,255,.75);border-radius:0 0 40px 40px;"></div>
<div style="left:640px;top:0px;width:18px;height:137px;background:#eef0f6;border-radius:0 0 0 30px;"></div>
<div style="left:4861px;top:0px;width:19px;height:137px;background:#d5e8f6;border-radius:0 0 30px 0;"></div>
<div style="left:658px;top:0px;width:4203px;height:120px;background:#f4f5f3;border-radius:0 0 22px 22px;box-shadow:0 2px 6px rgba(0,0,0,.18);"></div>
<div style="left:690px;top:14px;width:243px;height:91.5px;background:#e3e6ec;border:2px solid #9a9a9a;border-radius:46px;"></div>
<svg style="left:704px;top:24px;" width="72" height="72" viewBox="0 0 72 72"><circle cx="36" cy="36" r="34.5" fill="#fff" stroke="#9dbde0" stroke-width="2"/><rect x="26" y="26.5" width="20" height="20" rx="1.2" fill="#f7d862"/><path d="M28.5 9.5Q36 7.8 43.5 9.5L45 19.5Q36 18.2 27 19.5z" fill="#0f7f9f"/><path d="M27 54Q36 55.3 45 54L43.5 64Q36 65.7 28.5 64z" fill="#82a038"/><path d="M8.5 30.5L19 28Q17.8 36.5 19 45.5L8.5 43Q7.5 36.5 8.5 30.5z" fill="#ef6c35"/><path d="M63.5 30.5L53 28Q54.2 36.5 53 45.5L63.5 43Q64.5 36.5 63.5 30.5z" fill="#a9b3a4"/><path d="M22.7 12.4Q16 16 11.5 23.2Q16.5 20.8 20.6 20.6Q20.6 16.5 22.7 12.4z" fill="#111"/><g transform="translate(72 0) scale(-1 1)"><path d="M22.7 12.4Q16 16 11.5 23.2Q16.5 20.8 20.6 20.6Q20.6 16.5 22.7 12.4z" fill="#111"/></g><g transform="translate(0 73.5) scale(1 -1)"><path d="M22.7 12.4Q16 16 11.5 23.2Q16.5 20.8 20.6 20.6Q20.6 16.5 22.7 12.4z" fill="#111"/></g><g transform="translate(72 73.5) scale(-1 -1)"><path d="M22.7 12.4Q16 16 11.5 23.2Q16.5 20.8 20.6 20.6Q20.6 16.5 22.7 12.4z" fill="#111"/></g></svg>
<span class="t" style="top:48.75px;font-size:26.5px;line-height:26.5px;color:#111;font-weight:700;transform:scaleX(0.9020);transform-origin:0 50%;left:791px;">NCSBN</span>
<svg style="left:887.5px;top:61px;" width="16" height="8" viewBox="0 0 16 8"><path d="M0 0h16L8 8z" fill="#111"/></svg>
<svg style="left:3644px;top:40.5px;" width="36" height="36" viewBox="0 0 36 36"><circle cx="18" cy="18" r="15.5" fill="none" stroke="#0d5191" stroke-width="4.6"/><path d="M18 8.5V18l6 4.5" fill="none" stroke="#0d5191" stroke-width="4.2"/></svg>
<span class="t" style="top:41px;font-size:35px;line-height:35px;color:#16589a;transform:scaleX(0.9777);transform-origin:0 50%;left:3690px;-webkit-text-stroke:.6px #f4f5f3;">8:44:08 PM</span>
<div style="left:3910.5px;top:22px;width:399px;height:77.5px;background:#e3e6ec;border:2px solid #9a9a9a;border-radius:39px;"></div>
<div style="left:4230px;top:23px;width:2px;height:75.5px;background:#9a9a9a;"></div>
<span class="t" style="top:45.5px;font-size:29px;line-height:29px;color:#666;transform:scaleX(0.9456);transform-origin:0 50%;left:3927.7px;">Find anything...</span>
<svg style="left:4255.5px;top:46.5px;" width="29" height="29" viewBox="0 0 28 28"><circle cx="11" cy="11" r="8.2" fill="none" stroke="#0e1836" stroke-width="5.2"/><path d="M17.5 17.5L26 26" stroke="#0e1836" stroke-width="5.8" stroke-linecap="round"/></svg>
<div style="left:4326px;top:20px;width:139.5px;height:80px;background:#e3e6ec;border:2px solid #9a9a9a;border-radius:40px;"></div>
<svg style="left:4348.5px;top:48px;" width="28" height="24" viewBox="0 0 28 24"><path d="M0 2.2h28M0 12h28M0 21.8h28" stroke="#0e1836" stroke-width="4.2"/></svg>
<svg style="left:4391.5px;top:27.5px;" width="65" height="65" viewBox="0 0 64 64"><defs><clipPath id="av1"><circle cx="32" cy="32" r="31.02"/></clipPath></defs><g clip-path="url(#av1)"><rect width="64" height="64" fill="#c5c3c2"/><path d="M14 64c2-6 8-8 13-9h12c5 1 9 2 12 9z" fill="#9a5a30"/><path d="M22 50h20v12H22z" fill="#935429"/><ellipse cx="49" cy="35" rx="2.6" ry="6" fill="#9c5e36"/><path d="M17.5 30c0-10 6-17 14.5-17s15 7 15 17c0 6-1 12-3.5 17-2.5 5-7 9-11.5 9s-9-4-11.5-9c-2-5-3-11-3-17z" fill="#aa6a3e"/><path d="M21 20c3-5 18-5 22 0 1 3 1 6 0 8-6-3-16-3-22 0-1-2-1-5 0-8z" fill="#b97a4a" opacity=".7"/><path d="M16.5 32c-2-16 5-26 15.5-26 11 0 19 8 18.5 22 0 3-1 5-2 7-.5-9-2-14-5-18-6 2-17 2-23-1-2.5 3-3.5 8-4 16z" fill="#1b1310"/><path d="M21 27.5c2-1.2 5-1.2 7 0M36 27.5c2-1.2 5-1.2 7 0" stroke="#20120c" stroke-width="1.4" fill="none"/><ellipse cx="24.5" cy="31" rx="2.7" ry="1.5" fill="#2a1710"/><ellipse cx="39.5" cy="31" rx="2.7" ry="1.5" fill="#2a1710"/><path d="M29 39.5c2 1.3 4 1.3 6 0" stroke="#7d4524" stroke-width="1.4" fill="none"/><path d="M24.5 43c4 1.5 11 1.5 15 0-1 6.5-14 6.5-15 0z" fill="#7c3b2c"/><path d="M26 44c3.5 1 8.5 1 12 0-1.5 3.5-10.5 3.5-12 0z" fill="#f6f1ec"/></g><circle cx="32" cy="32" r="31.02" fill="none" stroke="#9a9a9a" stroke-width="1.97"/></svg>
<div style="left:4436px;top:69px;width:21px;height:21px;background:#2ecc71;border-radius:50%;"></div>
<div style="left:4474px;top:20px;width:80px;height:80px;background:#e3e6ec;border:2px solid #9a9a9a;border-radius:50%;"></div>
<div style="left:4569.5px;top:20px;width:80px;height:80px;background:#e3e6ec;border:2px solid #9a9a9a;border-radius:50%;"></div>
<div style="left:4666px;top:20px;width:80px;height:80px;background:#e3e6ec;border:2px solid #9a9a9a;border-radius:50%;"></div>
<div style="left:4761.5px;top:20px;width:80px;height:80px;background:#e3e6ec;border:2px solid #9a9a9a;border-radius:50%;"></div>
<svg style="left:4500px;top:46px;" width="28" height="28" viewBox="0 0 28 28"><path d="M14 1v26M1 14h26" stroke="#0e1836" stroke-width="6.4" stroke-linecap="round"/></svg>
<svg style="left:4593px;top:44px;" width="33" height="33" viewBox="0 0 35 35"><g fill="none" stroke="#0e1836" stroke-width="5.8" stroke-linecap="round"><path d="M15 20.5a7.5 7.5 0 010-10.6l5-5a7.5 7.5 0 0110.6 10.6l-3 3"/><path d="M20 14.5a7.5 7.5 0 010 10.6l-5 5A7.5 7.5 0 014.4 19.5l3-3"/></g></svg>
<svg style="left:4692px;top:43px;" width="28.5" height="32.5" viewBox="0 0 28.5 32.5"><path fill-rule="evenodd" fill="#0e1836" d="M6 0h3.6v5.4h9.3V0h3.6v5.4H25a3.5 3.5 0 013.5 3.5V29a3.5 3.5 0 01-3.5 3.5h-21.5A3.5 3.5 0 010 29V8.9a3.5 3.5 0 013.5-3.5H6zM4 15.6v4.8h20.5v-4.8z"/></svg>
<svg style="left:4786.5px;top:42px;" width="30" height="35" viewBox="0 0 30 35"><path fill="#0e1836" d="M15 0a2.5 2.5 0 012.5 2.5v1.2C22.5 5 26 9 26 14.5c0 6 1.5 8.5 3.5 10.5.8.8.2 2.5-1 2.5H1.5c-1.2 0-1.8-1.7-1-2.5C2.5 23 4 20.5 4 14.5 4 9 7.5 5 12.5 3.7V2.5A2.5 2.5 0 0115 0zM10.5 30h9a4.5 4.5 0 01-9 0z"/></svg>
<div style="left:4807.5px;top:12.5px;width:42px;height:42px;background:#ff5b61;border-radius:19px;box-shadow:0 0 4px rgba(255,91,97,.6);"></div>
<span class="t" style="top:20.5px;font-size:27px;line-height:27px;color:#fff;left:4828.5px;transform:translateX(-50%);">6</span>
<div style="left:690.5px;top:206.5px;width:199px;height:199px;background:#d81b60;border:5px solid #fff;border-radius:50%;"></div>
<svg style="left:743.5px;top:268px;" width="93" height="81" viewBox="0 0 93 81"><rect width="93" height="81" rx="10" fill="#fff"/><circle cx="23.5" cy="23.5" r="7" fill="#d81b60"/><rect x="35.5" y="18.5" width="39.5" height="10" fill="#d81b60"/><circle cx="23.5" cy="40.5" r="7" fill="#d81b60"/><rect x="35.5" y="35.5" width="39.5" height="10" fill="#d81b60"/><circle cx="23.5" cy="57.5" r="7" fill="#d81b60"/><rect x="35.5" y="52.5" width="39.5" height="10" fill="#d81b60"/></svg>
<div style="left:924px;top:193px;width:111px;height:40px;background:#20c95c;border-radius:8px;"></div>
<span class="t" style="top:202.5px;font-size:22px;line-height:22px;color:#fff;font-weight:700;transform:scaleX(1.0082);transform-origin:0 50%;left:934.7px;">On track</span>
<div style="left:924px;top:245.5px;width:622px;height:63px;border:1.5px solid rgba(255,255,255,.22);border-radius:32px;"></div>
<span class="t" style="top:256.25px;font-size:38.5px;line-height:38.5px;color:#fff;font-weight:700;transform:scaleX(0.9762);transform-origin:0 50%;left:939px;text-shadow:0 2px 4px rgba(0,0,0,.6);-webkit-text-stroke:.6px #fff;">Project: New Intranet Launch</span>
<svg style="left:1486px;top:250px;" width="52" height="52" viewBox="0 0 52 52"><polygon points="26.0,7.0 31.9,18.9 45.0,20.8 35.5,30.1 37.8,43.2 26.0,37.0 14.2,43.2 16.5,30.1 7.0,20.8 20.1,18.9" fill="#fdb913" stroke="#fdb913" stroke-width="5" stroke-linejoin="round"/></svg>
<div style="left:924px;top:335.5px;width:105px;height:39.5px;background:#d81b60;border-radius:8px;"></div>
<span class="t" style="top:344.5px;font-size:22px;line-height:22px;color:#fff;font-weight:700;transform:scaleX(1.0165);transform-origin:0 50%;left:934.7px;">Product</span>
<div style="left:1058px;top:337px;width:35.5px;height:35.5px;background:#f2f2f2;border-radius:50%;"></div>
<svg style="left:1068px;top:344px;" width="16" height="22" viewBox="0 0 16 22"><circle cx="8" cy="3.5" r="3.2" fill="#0e1836"/><path d="M3 8.5h8V18h2.5v3h-11v-3H5v-6.5H3z" fill="#0e1836"/></svg>
<div style="left:658px;top:467px;width:4203px;height:120px;background:#212121;"></div>
<div style="left:690px;top:495px;width:137px;height:64.5px;background:#e6e6e6;border-radius:9px;"></div>
<svg style="left:716px;top:515px;" width="18" height="25" viewBox="0 0 18 25"><path d="M14.5 3L4 12.5l10.5 9.5" fill="none" stroke="#212121" stroke-width="5.4" stroke-linecap="round" stroke-linejoin="round"/></svg>
<span class="t" style="top:515.5px;font-size:24px;line-height:24px;color:#212121;font-weight:700;transform:scaleX(0.9063);transform-origin:0 50%;left:749px;-webkit-text-stroke:.25px #e6e6e6;">Back</span>
<div style="left:4670px;top:495px;width:160px;height:62.5px;background:#e6e6e6;border-radius:9px;"></div>
<span class="t" style="top:514px;font-size:24px;line-height:24px;color:#212121;font-weight:700;transform:scaleX(0.9736);transform-origin:0 50%;left:4696.5px;-webkit-text-stroke:.25px #e6e6e6;">Manage</span>
<svg style="left:4789.5px;top:522.5px;" width="14" height="7.5" viewBox="0 0 14 7.5"><path d="M0 0h14L7 7.5z" fill="#212121"/></svg>
<div style="left:658px;top:587px;width:4203px;height:89px;background:#fff;border:2px solid #d5dbe5;border-top:none;border-radius:0 0 12px 12px;"></div>
<svg style="left:694px;top:607px;" width="45" height="37" viewBox="0 0 45 37"><path fill="#333" d="M22.5 2L0 21.5l2.5 3L22.5 7.5l20 17 2.5-3L37 14.8V4h-5v6.5zM22.5 11L6.5 24.5V37h11.5V26.5h9V37h11.5V24.5z"/></svg>
<span class="t" style="top:619.8px;font-size:24.4px;line-height:24.4px;color:#2b2b2b;font-weight:700;transform:scaleX(0.8891);transform-origin:0 50%;left:805.5px;-webkit-text-stroke:.25px #fff;">OVERVIEW</span>
<div style="left:949.5px;top:597.5px;width:166px;height:66px;background:#eaeff8;border:2px solid #c5cddb;border-radius:11px;"></div>
<span class="t" style="top:619.8px;font-size:24.4px;line-height:24.4px;color:#0d5191;font-weight:700;transform:scaleX(0.9090);transform-origin:0 50%;left:967px;-webkit-text-stroke:.25px #eaeff8;">TASKS</span>
<div style="left:1047px;top:615.5px;width:50.5px;height:33px;background:#778899;border:2px solid #b3bfce;border-radius:17px;"></div>
<span class="t" style="top:622.75px;font-size:19.5px;line-height:19.5px;color:#fff;left:1072.25px;transform:translateX(-50%);">12</span>
<span class="t" style="top:619.8px;font-size:24.4px;line-height:24.4px;color:#2b2b2b;font-weight:700;transform:scaleX(0.8856);transform-origin:0 50%;left:1142.5px;-webkit-text-stroke:.25px #fff;">COLLABORATORS</span>
<div style="left:1345.5px;top:615.5px;width:42px;height:33px;background:#778899;border:2px solid #b3bfce;border-radius:17px;"></div>
<span class="t" style="top:622.75px;font-size:19.5px;line-height:19.5px;color:#fff;left:1366.5px;transform:translateX(-50%);">9</span>
<span class="t" style="top:619.8px;font-size:24.4px;line-height:24.4px;color:#2b2b2b;font-weight:700;transform:scaleX(0.9015);transform-origin:0 50%;left:1440.5px;-webkit-text-stroke:.25px #fff;">CHECK-IN</span>
<div style="left:1555.5px;top:615.5px;width:42.5px;height:33px;background:#778899;border:2px solid #b3bfce;border-radius:17px;"></div>
<span class="t" style="top:622.75px;font-size:19.5px;line-height:19.5px;color:#fff;left:1576.75px;transform:translateX(-50%);">2</span>
<span class="t" style="top:619.8px;font-size:24.4px;line-height:24.4px;color:#2b2b2b;font-weight:700;transform:scaleX(0.9369);transform-origin:0 50%;left:1651px;-webkit-text-stroke:.25px #fff;">AUTOMATIONS</span>
<span class="t" style="top:619.8px;font-size:24.4px;line-height:24.4px;color:#2b2b2b;font-weight:700;transform:scaleX(0.9314);transform-origin:0 50%;left:1871px;-webkit-text-stroke:.25px #fff;">ACTIVITY</span>
<div style="left:1982.5px;top:615.5px;width:49px;height:33px;background:#778899;border:2px solid #b3bfce;border-radius:17px;"></div>
<span class="t" style="top:622.75px;font-size:19.5px;line-height:19.5px;color:#fff;left:2007px;transform:translateX(-50%);">21</span>
<div style="left:4742.5px;top:608px;width:87px;height:42.5px;background:#0d5191;border:2px solid #7aa5e0;border-radius:8px;"></div>
<span class="t" style="top:619.5px;font-size:20px;line-height:20px;color:#fff;font-weight:700;transform:scaleX(0.9513);transform-origin:0 50%;left:4754px;">Tabs</span>
<svg style="left:4803.5px;top:627px;" width="13" height="7" viewBox="0 0 13 7"><path d="M0 0h13L6.5 7z" fill="#fff"/></svg>
<div style="left:659px;top:697.5px;width:4202px;height:88px;background:#fdf6e2;border:2px solid #fbe5c0;border-radius:11px;"></div>
<div style="left:690.5px;top:724.5px;width:27px;height:27px;background:#8a6d3b;border-radius:50%;"></div>
<svg style="left:698.5px;top:730px;" width="11" height="16" viewBox="0 0 11 16"><circle cx="5.5" cy="2.5" r="2.3" fill="#fdf6e2"/><path d="M2 6h6v7h1.8v2.3H1.2V13H3.8V8.3H2z" fill="#fdf6e2"/></svg>
<span class="t" style="top:725.85px;font-size:27.5px;line-height:27.5px;color:#916e35;transform:scaleX(1.0081);transform-origin:0 50%;left:725.5px;">Suggested: This project has been recommended for you based on your expertise. Review the</span>
<span class="t" style="top:725.85px;font-size:27.5px;line-height:27.5px;color:#800080;font-weight:700;transform:scaleX(0.9491);transform-origin:0 50%;left:1878.5px;text-decoration:underline;text-decoration-thickness:2.5px;text-underline-offset:5px;">project overview</span>
<span class="t" style="top:725.85px;font-size:27.5px;line-height:27.5px;color:#916e35;transform:scaleX(1.0152);transform-origin:0 50%;left:2093px;">and decide if you'd like to claim it. Once claimed, only collaborators will have access.</span>
<div style="left:3144.5px;top:719.5px;width:179px;height:44px;background:#ff6f00;border-radius:9px;"></div>
<span class="t" style="top:731px;font-size:22px;line-height:22px;color:#fff;font-weight:700;transform:scaleX(1.0078);transform-origin:0 50%;left:3157.5px;">Claim project?</span>
<div style="left:659px;top:807px;width:4202px;height:87px;background:#fff;border:2px solid #d8dce3;border-radius:16px;"></div>
<svg style="left:690px;top:829px;" width="40" height="41" viewBox="0 0 40 41"><path d="M2 0h36a2 2 0 011.5 3.3L25 19.5V39a1.5 1.5 0 01-2.4 1.2l-7-5A1.5 1.5 0 0115 34V19.5L.5 3.3A2 2 0 012 0z" fill="#0d5191"/></svg>
<div style="left:4245px;top:814px;width:163px;height:72px;background:#a6eb3c;border-radius:10px;"></div>
<span class="t" style="top:835.75px;font-size:28.5px;line-height:28.5px;color:#000;font-weight:700;transform:scaleX(0.9042);transform-origin:0 50%;left:4268px;">Actions</span>
<svg style="left:4370.5px;top:848px;" width="16" height="8" viewBox="0 0 16 8"><path d="M0 0h16L8 8z" fill="#000"/></svg>
<div style="left:4432px;top:828.5px;width:2px;height:43px;background:#222;"></div>
<div style="left:4454px;top:818px;width:64px;height:64px;border:2.5px solid rgba(13,79,143,0.45);border-radius:50%;background:#fff;"></div>
<svg style="left:4468px;top:833px;" width="36" height="32" viewBox="0 0 36 32"><g opacity=".5"><rect x="1.5" y="1.5" width="33" height="29" rx="2" fill="none" stroke="#5b86ff" stroke-width="3"/><circle cx="9" cy="9" r="2.3" fill="#5b86ff"/><circle cx="9" cy="16" r="2.3" fill="#5b86ff"/><circle cx="9" cy="23" r="2.3" fill="#5b86ff"/><path d="M14 9h15M14 16h15M14 23h15" stroke="#5b86ff" stroke-width="3"/></g></svg>
<div style="left:4533px;top:818px;width:64px;height:64px;border:2.5px solid rgba(13,79,143,1);border-radius:50%;background:#fff;"></div>
<svg style="left:4546.5px;top:832.5px;" width="37" height="33" viewBox="0 0 37 33"><path fill="#5b86ff" d="M0 0h17v14H0zM20 0h17v14H20zM0 17h17v14H0zM20 17h17v14H20z"/></svg>
<div style="left:4611px;top:818px;width:64px;height:64px;border:2.5px solid rgba(13,79,143,1);border-radius:50%;background:#fff;"></div>
<svg style="left:4624.5px;top:833px;" width="37" height="32" viewBox="0 0 37 32"><path fill="#5b86ff" d="M0 0h32v6.5H0zM5 12.5h32V19H5zM0 25h32v6.5H0z"/></svg>
<div style="left:4690px;top:818px;width:64px;height:64px;border:2.5px solid rgba(13,79,143,1);border-radius:50%;background:#fff;"></div>
<svg style="left:4706px;top:830px;" width="32" height="37" viewBox="0 0 32 37"><path fill-rule="evenodd" fill="#5b86ff" d="M6 0h4v4.5h12V0h4v4.5h3a3 3 0 013 3V34a3 3 0 01-3 3H3a3 3 0 01-3-3V7.5a3 3 0 013-3h3zM3.5 13v20.5h25V13zm3.5 3.5h4.5v4H7zm6.8 0h4.5v4h-4.5zm6.8 0H25v4h-4.4zM7 23.5h4.5v4H7zm6.8 0h4.5v4h-4.5zm6.8 0H25v4h-4.4z"/></svg>
<div style="left:4768px;top:818px;width:64px;height:64px;border:2.5px solid rgba(13,79,143,1);border-radius:50%;background:#fff;"></div>
<svg style="left:4784px;top:835px;" width="32" height="28" viewBox="0 0 32 28"><path fill="#5b86ff" d="M0 0h32v4.6H0zM0 11.5h32v4.6H0zM0 23h32v4.6H0z"/></svg>
<div style="left:660px;top:917px;width:4200px;height:79px;background:#0d5191;border-radius:22px 22px 0 0;"></div>
<span class="t" style="top:942.5px;font-size:28px;line-height:28px;color:#fff;transform:scaleX(1.0087);transform-origin:0 50%;left:688.5px;">Start tasks (12)</span>
<div style="left:679.5px;top:997px;width:10.5px;height:1803px;background:#0e1836;"></div>
<div style="left:740px;top:1020px;width:185px;height:64px;background:#5b86b6;border-radius:9px 0 0 9px;"></div>
<span class="t" style="top:1040px;font-size:25px;line-height:25px;color:#e9eff6;font-weight:700;transform:scaleX(0.8880);transform-origin:0 50%;left:766.5px;">Bulk actions</span>
<div style="left:927px;top:1020px;width:82px;height:64px;background:#0d5191;"></div>
<div style="left:951px;top:1030px;width:34.5px;height:34px;background:#fff;border:2px solid #cfd8e6;border-radius:7px;"></div>
<div style="left:1011px;top:1020px;width:76px;height:64px;background:#0d5191;border-radius:0 9px 9px 0;"></div>
<svg style="left:1036px;top:1038px;" width="26" height="25" viewBox="0 0 26 25"><g fill="none" stroke="#fff" stroke-width="4.4"><path d="M3 10.5A10 10 0 0121 6"/><path d="M23 14.5A10 10 0 015 19"/></g><path d="M24.5 0v9.5H15zM1.5 25v-9.5H11z" fill="#fff"/></svg>
<div style="left:4625px;top:1021px;width:234px;height:62px;background:#fff;border:2px solid #cfd6e0;border-radius:9px;"></div>
<div style="left:4625px;top:1021px;width:77px;height:62px;background:#fafbfd;border:2px solid #cfd6e0;border-radius:9px 0 0 9px;"></div>
<svg style="left:4650px;top:1039.5px;" width="27" height="27" viewBox="0 0 28 28"><circle cx="11" cy="11" r="8.2" fill="none" stroke="#8fa3bd" stroke-width="4.6"/><path d="M17.5 17.5L26 26" stroke="#8fa3bd" stroke-width="5.199999999999999" stroke-linecap="round"/></svg>
<span class="t" style="top:1037px;font-size:28px;line-height:28px;color:#9fb0c8;transform:scaleX(0.9370);transform-origin:0 50%;left:4718px;">Search...</span>
<div style="left:740px;top:1214px;width:4120px;height:579px;background:#fff;border-radius:0 0 22px 22px;box-shadow:0 2px 3px rgba(120,140,170,.25);"></div>
<div style="left:740px;top:1104px;width:4120px;height:121px;background:#0e1836;border-radius:22px 22px 0 0;"></div>
<svg style="left:767px;top:1139px;" width="28" height="18" viewBox="0 0 28 18"><path d="M3 3l11 11L25 3" fill="none" stroke="#fff" stroke-width="5.2" stroke-linecap="round" stroke-linejoin="round"/></svg>
<span class="t" style="top:1133.25px;font-size:30.5px;line-height:30.5px;color:#fff;font-weight:700;transform:scaleX(0.9408);transform-origin:0 50%;left:812px;">Pre-project</span>
<span class="t" style="top:1176.25px;font-size:23.5px;line-height:23.5px;color:#d6d9e2;transform:scaleX(1.0031);transform-origin:0 50%;left:812px;">From</span>
<span class="t" style="top:1176.25px;font-size:23.5px;line-height:23.5px;color:#d6d9e2;font-weight:700;transform:scaleX(1.0647);transform-origin:0 50%;left:874px;">12-06-2025</span>
<span class="t" style="top:1176.25px;font-size:23.5px;line-height:23.5px;color:#d6d9e2;transform:scaleX(1.0709);transform-origin:0 50%;left:1009px;">to</span>
<span class="t" style="top:1176.25px;font-size:23.5px;line-height:23.5px;color:#d6d9e2;font-weight:700;transform:scaleX(1.0730);transform-origin:0 50%;left:1036px;">29-06-2025</span>
<span class="t" style="top:1180.5px;font-size:17px;line-height:17px;color:#d6d9e2;left:1180.5px;">•</span>
<span class="t" style="top:1176.25px;font-size:23.5px;line-height:23.5px;color:#d6d9e2;transform:scaleX(1.0379);transform-origin:0 50%;left:1197px;">Total tasks:</span>
<div style="left:1326px;top:1170.5px;width:44px;height:34.5px;background:#66738c;border:2px solid #a4adbd;border-radius:17px;"></div>
<span class="t" style="top:1178.75px;font-size:19.5px;line-height:19.5px;color:#e3e6ee;left:1348px;transform:translateX(-50%);">4</span>
<div style="left:4792px;top:1124px;width:40px;height:40px;background:#0d5191;border:2px solid #8fb2dc;border-radius:50%;"></div>
<div style="left:4808px;top:1132px;width:8px;height:8px;background:#fff;border-radius:50%;"></div>
<div style="left:4808px;top:1140px;width:8px;height:8px;background:#fff;border-radius:50%;"></div>
<div style="left:4808px;top:1148px;width:8px;height:8px;background:#fff;border-radius:50%;"></div>
<svg style="left:720px;top:1221.5px;" width="21" height="42" viewBox="0 0 21 42"><path d="M21 0v42L0 21z" fill="#fff"/></svg>
<div style="left:663.5px;top:1222px;width:41px;height:41px;background:#d9dde8;border:10.5px solid #0e1836;border-radius:50%;"></div>
<div style="left:770px;top:1253px;width:4059px;height:438px;border:2px solid #dfe3ea;"></div>
<div style="left:798px;top:1291px;width:34px;height:34px;background:#f1f2f7;border:2px solid #b8c5d8;border-radius:7px;"></div>
<div style="left:868px;top:1289px;width:40px;height:40px;background:#84c427;border-radius:50%;"></div>
<svg style="left:880px;top:1301.5px;" width="16" height="14" viewBox="0 0 16 14"><path d="M2 7l4.5 4.5L14 3" fill="none" stroke="#fff" stroke-width="4.2" stroke-linejoin="round"/></svg>
<span class="t" style="top:1293.2px;font-size:26px;line-height:26px;color:#5585f5;transform:scaleX(0.9996);transform-origin:0 50%;left:927px;">Establish an initial project team (Days)</span>
<div style="left:1966px;top:1275.5px;width:120px;height:60px;background:#778899;border-radius:30px;"></div>
<svg style="left:2001px;top:1293.5px;" width="27" height="24" viewBox="0 0 27 24"><path d="M14 2c6.3 0 11 3.7 11 8.3s-4.7 8.3-11 8.3c-1.3 0-2.5-.2-3.6-.5-1.5 1.2-4 2.7-7.400 3.1 1.5-1.7 2.3-3.400 2.5-5C3.9 14.7 3 12.6 3 10.3 3 5.7 7.7 2 14 2z" fill="none" stroke="#fff" stroke-width="2.8"/></svg>
<span class="t" style="top:1292.5px;font-size:27px;line-height:27px;color:#fff;font-weight:700;left:2033.5px;-webkit-text-stroke:.5px #fff;">0</span>
<div style="left:2645.5px;top:1276.3px;width:280.5px;height:60px;background:#84c427;border-radius:30px;"></div>
<span class="t" style="top:1294px;font-size:26px;line-height:26px;color:#fff;transform:scaleX(0.9573);transform-origin:0 50%;left:2706px;">Done</span>
<svg style="left:2877.5px;top:1305px;" width="17" height="9" viewBox="0 0 17 9"><path d="M0 0h17L8.5 9z" fill="#fff"/></svg>
<div style="left:3152px;top:1293px;width:26px;height:26px;background:#03a9f4;border-radius:50%;"></div>
<span class="t" style="top:1294px;font-size:26px;line-height:26px;color:#222;transform:scaleX(0.9774);transform-origin:0 50%;left:3191px;">15-02-2023</span>
<div style="left:3531px;top:1275.5px;width:240px;height:64px;background:#f0f0f0;border-radius:32px;overflow:hidden;box-shadow:inset 0 2px 3px rgba(0,0,0,.08);"><div style="left:0px;top:0px;width:216px;height:64px;background:#84c427;box-shadow:inset 0 -3px 1px rgba(0,0,0,.15);"></div></div>
<span class="t" style="top:1294.5px;font-size:25px;line-height:25px;color:#333;font-weight:700;transform:scaleX(0.9491);transform-origin:0 50%;left:3588px;">90%</span>
<svg style="left:4049px;top:1276.5px;" width="64" height="64" viewBox="0 0 64 64"><defs><clipPath id="av2"><circle cx="32" cy="32" r="30.00"/></clipPath></defs><g clip-path="url(#av2)"><rect width="64" height="64" fill="#c5c3c2"/><path d="M14 64c2-6 8-8 13-9h12c5 1 9 2 12 9z" fill="#9a5a30"/><path d="M22 50h20v12H22z" fill="#935429"/><ellipse cx="49" cy="35" rx="2.6" ry="6" fill="#9c5e36"/><path d="M17.5 30c0-10 6-17 14.5-17s15 7 15 17c0 6-1 12-3.5 17-2.5 5-7 9-11.5 9s-9-4-11.5-9c-2-5-3-11-3-17z" fill="#aa6a3e"/><path d="M21 20c3-5 18-5 22 0 1 3 1 6 0 8-6-3-16-3-22 0-1-2-1-5 0-8z" fill="#b97a4a" opacity=".7"/><path d="M16.5 32c-2-16 5-26 15.5-26 11 0 19 8 18.5 22 0 3-1 5-2 7-.5-9-2-14-5-18-6 2-17 2-23-1-2.5 3-3.5 8-4 16z" fill="#1b1310"/><path d="M21 27.5c2-1.2 5-1.2 7 0M36 27.5c2-1.2 5-1.2 7 0" stroke="#20120c" stroke-width="1.4" fill="none"/><ellipse cx="24.5" cy="31" rx="2.7" ry="1.5" fill="#2a1710"/><ellipse cx="39.5" cy="31" rx="2.7" ry="1.5" fill="#2a1710"/><path d="M29 39.5c2 1.3 4 1.3 6 0" stroke="#7d4524" stroke-width="1.4" fill="none"/><path d="M24.5 43c4 1.5 11 1.5 15 0-1 6.5-14 6.5-15 0z" fill="#7c3b2c"/><path d="M26 44c3.5 1 8.5 1 12 0-1.5 3.5-10.5 3.5-12 0z" fill="#f6f1ec"/></g><circle cx="32" cy="32" r="30.00" fill="none" stroke="#2f8fe8" stroke-width="4.00"/></svg>
<div style="left:4417px;top:1277.5px;width:78.8px;height:62px;background:#0d5191;border-radius:9px 0 0 9px;"></div>
<svg style="left:4442px;top:1299px;" width="28.2" height="18.5" viewBox="0 0 29 19"><path fill-rule="evenodd" fill="#fff" d="M14.5 0C21 0 26.5 4.5 29 9.5 26.5 14.5 21 19 14.5 19S2.5 14.5 0 9.5C2.5 4.5 8 0 14.5 0zm0 2.8a6.7 6.7 0 100 13.4 6.7 6.7 0 000-13.4zm0 2.5a4.2 4.2 0 11-4.1 3.5 2.2 2.2 0 003-2.9c.3-.4.7-.6 1.1-.6z"/></svg>
<div style="left:4498px;top:1277.5px;width:76px;height:62px;background:#0d5191;"></div>
<svg style="left:4523px;top:1295.5px;" width="25.5" height="25.5" viewBox="0 0 26 26.5"><path fill="#fff" d="M19.5 1.2a3 3 0 014.2 0l1.6 1.6a3 3 0 010 4.2l-2 2-5.8-5.8zM16 4.7l5.8 5.8L8.3 24 .5 26l2-7.8zM4.3 19.5l-1 3.7 3.7-1z"/></svg>
<div style="left:4576px;top:1277.5px;width:73px;height:62px;background:#fa2a42;border-radius:0 9px 9px 0;"></div>
<svg style="left:4601px;top:1295.5px;" width="21.8" height="24.5" viewBox="0 0 23 27"><path fill-rule="evenodd" fill="#fff" d="M8 0h7l1 2.5h6.5V6H.5V2.5H7zM2 8h19l-1 16.5a2.5 2.5 0 01-2.5 2.5h-12A2.5 2.5 0 013 24.5zm3 2.8l.7 13.400h11.6l.7-13.400zm2.3 1.7h2.2v10H7.3zm5.2 0h2.2v10h-2.2z"/></svg>
<div style="left:770px;top:1362px;width:4059px;height:2.5px;background:#dfe3ea;"></div>
<div style="left:798px;top:1400px;width:34px;height:34px;background:#f1f2f7;border:2px solid #b8c5d8;border-radius:7px;"></div>
<div style="left:868px;top:1398px;width:40px;height:40px;background:#84c427;border-radius:50%;"></div>
<svg style="left:880px;top:1410.5px;" width="16" height="14" viewBox="0 0 16 14"><path d="M2 7l4.5 4.5L14 3" fill="none" stroke="#fff" stroke-width="4.2" stroke-linejoin="round"/></svg>
<span class="t" style="top:1402.2px;font-size:26px;line-height:26px;color:#5585f5;transform:scaleX(0.9884);transform-origin:0 50%;left:927px;">Develop and define your intranet strategy</span>
<div style="left:1966px;top:1384.5px;width:120px;height:60px;background:#778899;border-radius:30px;"></div>
<svg style="left:2001px;top:1402.5px;" width="27" height="24" viewBox="0 0 27 24"><path d="M14 2c6.3 0 11 3.7 11 8.3s-4.7 8.3-11 8.3c-1.3 0-2.5-.2-3.6-.5-1.5 1.2-4 2.7-7.400 3.1 1.5-1.7 2.3-3.400 2.5-5C3.9 14.7 3 12.6 3 10.3 3 5.7 7.7 2 14 2z" fill="none" stroke="#fff" stroke-width="2.8"/></svg>
<span class="t" style="top:1401.5px;font-size:27px;line-height:27px;color:#fff;font-weight:700;left:2033.5px;-webkit-text-stroke:.5px #fff;">0</span>
<div style="left:2645.5px;top:1385.3px;width:280.5px;height:60px;background:#c93c55;border-radius:30px;"></div>
<span class="t" style="top:1403px;font-size:26px;line-height:26px;color:#fff;transform:scaleX(0.9918);transform-origin:0 50%;left:2706px;">Stuck</span>
<svg style="left:2877.5px;top:1414px;" width="17" height="9" viewBox="0 0 17 9"><path d="M0 0h17L8.5 9z" fill="#fff"/></svg>
<div style="left:3152px;top:1402px;width:26px;height:26px;background:#ff6f00;border-radius:50%;"></div>
<span class="t" style="top:1403px;font-size:26px;line-height:26px;color:#222;transform:scaleX(0.9774);transform-origin:0 50%;left:3191px;">22-02-2023</span>
<div style="left:3531px;top:1384.5px;width:240px;height:64px;background:#f0f0f0;border-radius:32px;overflow:hidden;box-shadow:inset 0 2px 3px rgba(0,0,0,.08);"><div style="left:0px;top:0px;width:144px;height:64px;background:#84c427;box-shadow:inset 0 -3px 1px rgba(0,0,0,.15);"></div></div>
<span class="t" style="top:1403.5px;font-size:25px;line-height:25px;color:#333;font-weight:700;transform:scaleX(0.9491);transform-origin:0 50%;left:3588px;">60%</span>
<svg style="left:4049px;top:1385.5px;" width="64" height="64" viewBox="0 0 64 64"><defs><clipPath id="av3"><circle cx="32" cy="32" r="30.00"/></clipPath></defs><g clip-path="url(#av3)"><rect width="64" height="64" fill="#c5c3c2"/><path d="M14 64c2-6 8-8 13-9h12c5 1 9 2 12 9z" fill="#9a5a30"/><path d="M22 50h20v12H22z" fill="#935429"/><ellipse cx="49" cy="35" rx="2.6" ry="6" fill="#9c5e36"/><path d="M17.5 30c0-10 6-17 14.5-17s15 7 15 17c0 6-1 12-3.5 17-2.5 5-7 9-11.5 9s-9-4-11.5-9c-2-5-3-11-3-17z" fill="#aa6a3e"/><path d="M21 20c3-5 18-5 22 0 1 3 1 6 0 8-6-3-16-3-22 0-1-2-1-5 0-8z" fill="#b97a4a" opacity=".7"/><path d="M16.5 32c-2-16 5-26 15.5-26 11 0 19 8 18.5 22 0 3-1 5-2 7-.5-9-2-14-5-18-6 2-17 2-23-1-2.5 3-3.5 8-4 16z" fill="#1b1310"/><path d="M21 27.5c2-1.2 5-1.2 7 0M36 27.5c2-1.2 5-1.2 7 0" stroke="#20120c" stroke-width="1.4" fill="none"/><ellipse cx="24.5" cy="31" rx="2.7" ry="1.5" fill="#2a1710"/><ellipse cx="39.5" cy="31" rx="2.7" ry="1.5" fill="#2a1710"/><path d="M29 39.5c2 1.3 4 1.3 6 0" stroke="#7d4524" stroke-width="1.4" fill="none"/><path d="M24.5 43c4 1.5 11 1.5 15 0-1 6.5-14 6.5-15 0z" fill="#7c3b2c"/><path d="M26 44c3.5 1 8.5 1 12 0-1.5 3.5-10.5 3.5-12 0z" fill="#f6f1ec"/></g><circle cx="32" cy="32" r="30.00" fill="none" stroke="#2f8fe8" stroke-width="4.00"/></svg>
<div style="left:4417px;top:1386.5px;width:78.8px;height:62px;background:#0d5191;border-radius:9px 0 0 9px;"></div>
<svg style="left:4442px;top:1408px;" width="28.2" height="18.5" viewBox="0 0 29 19"><path fill-rule="evenodd" fill="#fff" d="M14.5 0C21 0 26.5 4.5 29 9.5 26.5 14.5 21 19 14.5 19S2.5 14.5 0 9.5C2.5 4.5 8 0 14.5 0zm0 2.8a6.7 6.7 0 100 13.4 6.7 6.7 0 000-13.4zm0 2.5a4.2 4.2 0 11-4.1 3.5 2.2 2.2 0 003-2.9c.3-.4.7-.6 1.1-.6z"/></svg>
<div style="left:4498px;top:1386.5px;width:76px;height:62px;background:#0d5191;"></div>
<svg style="left:4523px;top:1404.5px;" width="25.5" height="25.5" viewBox="0 0 26 26.5"><path fill="#fff" d="M19.5 1.2a3 3 0 014.2 0l1.6 1.6a3 3 0 010 4.2l-2 2-5.8-5.8zM16 4.7l5.8 5.8L8.3 24 .5 26l2-7.8zM4.3 19.5l-1 3.7 3.7-1z"/></svg>
<div style="left:4576px;top:1386.5px;width:73px;height:62px;background:#fa2a42;border-radius:0 9px 9px 0;"></div>
<svg style="left:4601px;top:1404.5px;" width="21.8" height="24.5" viewBox="0 0 23 27"><path fill-rule="evenodd" fill="#fff" d="M8 0h7l1 2.5h6.5V6H.5V2.5H7zM2 8h19l-1 16.5a2.5 2.5 0 01-2.5 2.5h-12A2.5 2.5 0 013 24.5zm3 2.8l.7 13.400h11.6l.7-13.400zm2.3 1.7h2.2v10H7.3zm5.2 0h2.2v10h-2.2z"/></svg>
<div style="left:770px;top:1471px;width:4059px;height:2.5px;background:#dfe3ea;"></div>
<div style="left:798px;top:1509px;width:34px;height:34px;background:#f1f2f7;border:2px solid #b8c5d8;border-radius:7px;"></div>
<div style="left:868px;top:1507px;width:40px;height:40px;background:#84c427;border-radius:50%;"></div>
<svg style="left:880px;top:1519.5px;" width="16" height="14" viewBox="0 0 16 14"><path d="M2 7l4.5 4.5L14 3" fill="none" stroke="#fff" stroke-width="4.2" stroke-linejoin="round"/></svg>
<span class="t" style="top:1511.2px;font-size:26px;line-height:26px;color:#5585f5;transform:scaleX(0.9995);transform-origin:0 50%;left:927px;">Book an installation day</span>
<div style="left:1966px;top:1493.5px;width:120px;height:60px;background:#778899;border-radius:30px;"></div>
<svg style="left:2001px;top:1511.5px;" width="27" height="24" viewBox="0 0 27 24"><path d="M14 2c6.3 0 11 3.7 11 8.3s-4.7 8.3-11 8.3c-1.3 0-2.5-.2-3.6-.5-1.5 1.2-4 2.7-7.400 3.1 1.5-1.7 2.3-3.400 2.5-5C3.9 14.7 3 12.6 3 10.3 3 5.7 7.7 2 14 2z" fill="none" stroke="#fff" stroke-width="2.8"/></svg>
<span class="t" style="top:1510.5px;font-size:27px;line-height:27px;color:#fff;font-weight:700;left:2033.5px;-webkit-text-stroke:.5px #fff;">0</span>
<div style="left:2645.5px;top:1494.3px;width:280.5px;height:60px;background:#3f51b5;border-radius:30px;"></div>
<span class="t" style="top:1512px;font-size:26px;line-height:26px;color:#fff;transform:scaleX(0.9757);transform-origin:0 50%;left:2706px;">Working on...</span>
<svg style="left:2877.5px;top:1523px;" width="17" height="9" viewBox="0 0 17 9"><path d="M0 0h17L8.5 9z" fill="#fff"/></svg>
<div style="left:3152px;top:1511px;width:26px;height:26px;background:#03a9f4;border-radius:50%;"></div>
<span class="t" style="top:1512px;font-size:26px;line-height:26px;color:#222;transform:scaleX(0.9774);transform-origin:0 50%;left:3191px;">28-02-2023</span>
<div style="left:3531px;top:1493.5px;width:240px;height:64px;background:#f0f0f0;border-radius:32px;overflow:hidden;box-shadow:inset 0 2px 3px rgba(0,0,0,.08);"><div style="left:0px;top:0px;width:216px;height:64px;background:#84c427;box-shadow:inset 0 -3px 1px rgba(0,0,0,.15);"></div></div>
<span class="t" style="top:1512.5px;font-size:25px;line-height:25px;color:#333;font-weight:700;transform:scaleX(0.9491);transform-origin:0 50%;left:3588px;">90%</span>
<svg style="left:4095px;top:1494.5px;" width="64" height="64" viewBox="0 0 64 64"><defs><clipPath id="av4"><circle cx="32" cy="32" r="30.00"/></clipPath></defs><g clip-path="url(#av4)"><rect width="64" height="64" fill="#c5c3c2"/><path d="M14 64c2-6 8-8 13-9h12c5 1 9 2 12 9z" fill="#9a5a30"/><path d="M22 50h20v12H22z" fill="#935429"/><ellipse cx="49" cy="35" rx="2.6" ry="6" fill="#9c5e36"/><path d="M17.5 30c0-10 6-17 14.5-17s15 7 15 17c0 6-1 12-3.5 17-2.5 5-7 9-11.5 9s-9-4-11.5-9c-2-5-3-11-3-17z" fill="#aa6a3e"/><path d="M21 20c3-5 18-5 22 0 1 3 1 6 0 8-6-3-16-3-22 0-1-2-1-5 0-8z" fill="#b97a4a" opacity=".7"/><path d="M16.5 32c-2-16 5-26 15.5-26 11 0 19 8 18.5 22 0 3-1 5-2 7-.5-9-2-14-5-18-6 2-17 2-23-1-2.5 3-3.5 8-4 16z" fill="#1b1310"/><path d="M21 27.5c2-1.2 5-1.2 7 0M36 27.5c2-1.2 5-1.2 7 0" stroke="#20120c" stroke-width="1.4" fill="none"/><ellipse cx="24.5" cy="31" rx="2.7" ry="1.5" fill="#2a1710"/><ellipse cx="39.5" cy="31" rx="2.7" ry="1.5" fill="#2a1710"/><path d="M29 39.5c2 1.3 4 1.3 6 0" stroke="#7d4524" stroke-width="1.4" fill="none"/><path d="M24.5 43c4 1.5 11 1.5 15 0-1 6.5-14 6.5-15 0z" fill="#7c3b2c"/><path d="M26 44c3.5 1 8.5 1 12 0-1.5 3.5-10.5 3.5-12 0z" fill="#f6f1ec"/></g><circle cx="32" cy="32" r="30.00" fill="none" stroke="#2f8fe8" stroke-width="4.00"/></svg>
<svg style="left:4049px;top:1494.5px;" width="64" height="64" viewBox="0 0 64 64"><defs><clipPath id="av5"><circle cx="32" cy="32" r="30.75"/></clipPath></defs><g clip-path="url(#av5)"><rect width="64" height="64" fill="#115aa2"/><path d="M14 64c2-5 7-6 11-7h15c4 1 9 2 11 7z" fill="#a8775a"/><path d="M23 50h24v12H23z" fill="#a17053"/><g fill="#17110f"><ellipse cx="33" cy="22" rx="24" ry="20"/><circle cx="13" cy="30" r="6"/><circle cx="53" cy="30" r="7"/><circle cx="16" cy="14" r="6"/><circle cx="50" cy="13" r="6"/><circle cx="25" cy="6" r="5"/><circle cx="40" cy="5" r="5"/><circle cx="52" cy="40" r="5"/><circle cx="14" cy="38" r="4"/></g><path d="M18.5 33c0-9 5-15.5 15-15.5s15 6.5 15 15.5c0 6-1 11-3 15.5-2.5 5-7 8.5-12 8.5s-9.5-3.5-12-8.5c-2-4.5-3-9.5-3-15.5z" fill="#b58463"/><path d="M18 30c1-9 4-14 9-15l3 4 3-4 3 5 3-5 3 4 3-3c3 3 4 8 4 14-1-4-3-7-5-9-8 2-17 2-22 1-2 2-3 4-4 8z" fill="#17110f"/><path d="M21.5 27.5c2.5-1.3 6-1.3 8 0M37 27.5c2-1.3 5.5-1.3 8 0" stroke="#1c120d" stroke-width="1.7" fill="none"/><ellipse cx="25.5" cy="30.5" rx="2.8" ry="1.5" fill="#24150f"/><ellipse cx="41" cy="30.5" rx="2.8" ry="1.5" fill="#24150f"/><path d="M30.5 39.5c2 1 4 1 5.5 0" stroke="#8a5a40" stroke-width="1.3" fill="none"/><path d="M27.5 44.5c2-1 9-1 11 0" stroke="#6e4a3a" stroke-width="1.6" fill="none" opacity=".7"/><path d="M28 46c3-.8 7-.8 10 0-1.5 2.6-8.5 2.6-10 0z" fill="#c27a7e"/></g><circle cx="32" cy="32" r="30.75" fill="none" stroke="#0e1836" stroke-width="2.50"/></svg>
<div style="left:4417px;top:1495.5px;width:78.8px;height:62px;background:#0d5191;border-radius:9px 0 0 9px;"></div>
<svg style="left:4442px;top:1517px;" width="28.2" height="18.5" viewBox="0 0 29 19"><path fill-rule="evenodd" fill="#fff" d="M14.5 0C21 0 26.5 4.5 29 9.5 26.5 14.5 21 19 14.5 19S2.5 14.5 0 9.5C2.5 4.5 8 0 14.5 0zm0 2.8a6.7 6.7 0 100 13.4 6.7 6.7 0 000-13.4zm0 2.5a4.2 4.2 0 11-4.1 3.5 2.2 2.2 0 003-2.9c.3-.4.7-.6 1.1-.6z"/></svg>
<div style="left:4498px;top:1495.5px;width:76px;height:62px;background:#0d5191;"></div>
<svg style="left:4523px;top:1513.5px;" width="25.5" height="25.5" viewBox="0 0 26 26.5"><path fill="#fff" d="M19.5 1.2a3 3 0 014.2 0l1.6 1.6a3 3 0 010 4.2l-2 2-5.8-5.8zM16 4.7l5.8 5.8L8.3 24 .5 26l2-7.8zM4.3 19.5l-1 3.7 3.7-1z"/></svg>
<div style="left:4576px;top:1495.5px;width:73px;height:62px;background:#fa2a42;border-radius:0 9px 9px 0;"></div>
<svg style="left:4601px;top:1513.5px;" width="21.8" height="24.5" viewBox="0 0 23 27"><path fill-rule="evenodd" fill="#fff" d="M8 0h7l1 2.5h6.5V6H.5V2.5H7zM2 8h19l-1 16.5a2.5 2.5 0 01-2.5 2.5h-12A2.5 2.5 0 013 24.5zm3 2.8l.7 13.400h11.6l.7-13.400zm2.3 1.7h2.2v10H7.3zm5.2 0h2.2v10h-2.2z"/></svg>
<div style="left:770px;top:1580px;width:4059px;height:2.5px;background:#dfe3ea;"></div>
<div style="left:798px;top:1618px;width:34px;height:34px;background:#f1f2f7;border:2px solid #b8c5d8;border-radius:7px;"></div>
<div style="left:868px;top:1616px;width:40px;height:40px;background:#84c427;border-radius:50%;"></div>
<svg style="left:880px;top:1628.5px;" width="16" height="14" viewBox="0 0 16 14"><path d="M2 7l4.5 4.5L14 3" fill="none" stroke="#fff" stroke-width="4.2" stroke-linejoin="round"/></svg>
<span class="t" style="top:1620.2px;font-size:26px;line-height:26px;color:#5585f5;transform:scaleX(0.9976);transform-origin:0 50%;left:927px;">Conduct a content inventory</span>
<div style="left:1966px;top:1602.5px;width:120px;height:60px;background:#778899;border-radius:30px;"></div>
<svg style="left:2001px;top:1620.5px;" width="27" height="24" viewBox="0 0 27 24"><path d="M14 2c6.3 0 11 3.7 11 8.3s-4.7 8.3-11 8.3c-1.3 0-2.5-.2-3.6-.5-1.5 1.2-4 2.7-7.400 3.1 1.5-1.7 2.3-3.400 2.5-5C3.9 14.7 3 12.6 3 10.3 3 5.7 7.7 2 14 2z" fill="none" stroke="#fff" stroke-width="2.8"/></svg>
<span class="t" style="top:1619.5px;font-size:27px;line-height:27px;color:#fff;font-weight:700;left:2033.5px;-webkit-text-stroke:.5px #fff;">0</span>
<div style="left:2645.5px;top:1603.3px;width:280.5px;height:60px;background:#84c427;border-radius:30px;"></div>
<span class="t" style="top:1621px;font-size:26px;line-height:26px;color:#fff;transform:scaleX(0.9573);transform-origin:0 50%;left:2706px;">Done</span>
<svg style="left:2877.5px;top:1632px;" width="17" height="9" viewBox="0 0 17 9"><path d="M0 0h17L8.5 9z" fill="#fff"/></svg>
<div style="left:3152px;top:1620px;width:26px;height:26px;background:#777777;border-radius:50%;"></div>
<span class="t" style="top:1621px;font-size:26px;line-height:26px;color:#222;transform:scaleX(0.9774);transform-origin:0 50%;left:3191px;">28-02-2023</span>
<div style="left:3531px;top:1602.5px;width:240px;height:64px;background:#f0f0f0;border-radius:32px;overflow:hidden;box-shadow:inset 0 2px 3px rgba(0,0,0,.08);"><div style="left:0px;top:0px;width:120px;height:64px;background:#84c427;box-shadow:inset 0 -3px 1px rgba(0,0,0,.15);"></div></div>
<span class="t" style="top:1621.5px;font-size:25px;line-height:25px;color:#333;font-weight:700;transform:scaleX(0.9491);transform-origin:0 50%;left:3588px;">50%</span>
<svg style="left:4141px;top:1603.5px;" width="64" height="64" viewBox="0 0 64 64"><defs><clipPath id="av6"><circle cx="32" cy="32" r="30.00"/></clipPath></defs><g clip-path="url(#av6)"><rect width="64" height="64" fill="#c5c3c2"/><path d="M14 64c2-6 8-8 13-9h12c5 1 9 2 12 9z" fill="#9a5a30"/><path d="M22 50h20v12H22z" fill="#935429"/><ellipse cx="49" cy="35" rx="2.6" ry="6" fill="#9c5e36"/><path d="M17.5 30c0-10 6-17 14.5-17s15 7 15 17c0 6-1 12-3.5 17-2.5 5-7 9-11.5 9s-9-4-11.5-9c-2-5-3-11-3-17z" fill="#aa6a3e"/><path d="M21 20c3-5 18-5 22 0 1 3 1 6 0 8-6-3-16-3-22 0-1-2-1-5 0-8z" fill="#b97a4a" opacity=".7"/><path d="M16.5 32c-2-16 5-26 15.5-26 11 0 19 8 18.5 22 0 3-1 5-2 7-.5-9-2-14-5-18-6 2-17 2-23-1-2.5 3-3.5 8-4 16z" fill="#1b1310"/><path d="M21 27.5c2-1.2 5-1.2 7 0M36 27.5c2-1.2 5-1.2 7 0" stroke="#20120c" stroke-width="1.4" fill="none"/><ellipse cx="24.5" cy="31" rx="2.7" ry="1.5" fill="#2a1710"/><ellipse cx="39.5" cy="31" rx="2.7" ry="1.5" fill="#2a1710"/><path d="M29 39.5c2 1.3 4 1.3 6 0" stroke="#7d4524" stroke-width="1.4" fill="none"/><path d="M24.5 43c4 1.5 11 1.5 15 0-1 6.5-14 6.5-15 0z" fill="#7c3b2c"/><path d="M26 44c3.5 1 8.5 1 12 0-1.5 3.5-10.5 3.5-12 0z" fill="#f6f1ec"/></g><circle cx="32" cy="32" r="30.00" fill="none" stroke="#2f8fe8" stroke-width="4.00"/></svg>
<svg style="left:4095px;top:1603.5px;" width="64" height="64" viewBox="0 0 64 64"><defs><clipPath id="av7"><circle cx="32" cy="32" r="30.75"/></clipPath></defs><g clip-path="url(#av7)"><rect width="64" height="64" fill="#115aa2"/><path d="M14 64c2-5 7-6 11-7h15c4 1 9 2 11 7z" fill="#a8775a"/><path d="M23 50h24v12H23z" fill="#a17053"/><g fill="#17110f"><ellipse cx="33" cy="22" rx="24" ry="20"/><circle cx="13" cy="30" r="6"/><circle cx="53" cy="30" r="7"/><circle cx="16" cy="14" r="6"/><circle cx="50" cy="13" r="6"/><circle cx="25" cy="6" r="5"/><circle cx="40" cy="5" r="5"/><circle cx="52" cy="40" r="5"/><circle cx="14" cy="38" r="4"/></g><path d="M18.5 33c0-9 5-15.5 15-15.5s15 6.5 15 15.5c0 6-1 11-3 15.5-2.5 5-7 8.5-12 8.5s-9.5-3.5-12-8.5c-2-4.5-3-9.5-3-15.5z" fill="#b58463"/><path d="M18 30c1-9 4-14 9-15l3 4 3-4 3 5 3-5 3 4 3-3c3 3 4 8 4 14-1-4-3-7-5-9-8 2-17 2-22 1-2 2-3 4-4 8z" fill="#17110f"/><path d="M21.5 27.5c2.5-1.3 6-1.3 8 0M37 27.5c2-1.3 5.5-1.3 8 0" stroke="#1c120d" stroke-width="1.7" fill="none"/><ellipse cx="25.5" cy="30.5" rx="2.8" ry="1.5" fill="#24150f"/><ellipse cx="41" cy="30.5" rx="2.8" ry="1.5" fill="#24150f"/><path d="M30.5 39.5c2 1 4 1 5.5 0" stroke="#8a5a40" stroke-width="1.3" fill="none"/><path d="M27.5 44.5c2-1 9-1 11 0" stroke="#6e4a3a" stroke-width="1.6" fill="none" opacity=".7"/><path d="M28 46c3-.8 7-.8 10 0-1.5 2.6-8.5 2.6-10 0z" fill="#c27a7e"/></g><circle cx="32" cy="32" r="30.75" fill="none" stroke="#0e1836" stroke-width="2.50"/></svg>
<svg style="left:4049px;top:1603.5px;" width="64" height="64" viewBox="0 0 64 64"><defs><clipPath id="av8"><circle cx="32" cy="32" r="30.75"/></clipPath></defs><g clip-path="url(#av8)"><rect width="64" height="64" fill="#115aa2"/><path d="M12 64c2-5 7-7 12-8h16c5 1 10 3 12 8z" fill="#d3a088"/><path d="M22 50h22v12H22z" fill="#cf9a82"/><path d="M10 34C8 16 18 2 33 2.5c14 .5 23 12 21 30-1 8-2 14-5 19-2-2-3-5-3-9L15 44c-2-2-4-5-5-10z" fill="#4a3228"/><path d="M14.5 32c0-10 7-18 17.5-18s17.5 8 17.5 18c0 6-1.5 12-4 16.5-3 5-8 8.5-13.5 8.5s-10.5-3.5-13.5-8.5c-2.5-4.5-4-10.5-4-16.5z" fill="#dcae96"/><path d="M13 34c-1-13 6-22 17-23 10-1 19 5 21 16 .5 3 .3 6-.5 9-1-7-4-12-8-15-5 4-14 7-22 7-3 1-5 3-7.5 6z" fill="#4a3228"/><path d="M20 28c2.5-1.2 6-1.2 8.5 0M36 28c2.5-1.2 6-1.2 8.5 0" stroke="#5a3a2c" stroke-width="1.3" fill="none"/><ellipse cx="24.5" cy="31" rx="2.7" ry="1.5" fill="#4a3830"/><ellipse cx="40" cy="31" rx="2.7" ry="1.5" fill="#4a3830"/><path d="M29.5 39.5c2 1.2 4 1.2 5.5 0" stroke="#b98570" stroke-width="1.3" fill="none"/><path d="M26.5 45.5c3.5-1.5 8-1.5 11.5 0-2 3.2-9.5 3.2-11.5 0z" fill="#c66f80"/></g><circle cx="32" cy="32" r="30.75" fill="none" stroke="#0e1836" stroke-width="2.50"/></svg>
<div style="left:4417px;top:1604.5px;width:78.8px;height:62px;background:#0d5191;border-radius:9px 0 0 9px;"></div>
<svg style="left:4442px;top:1626px;" width="28.2" height="18.5" viewBox="0 0 29 19"><path fill-rule="evenodd" fill="#fff" d="M14.5 0C21 0 26.5 4.5 29 9.5 26.5 14.5 21 19 14.5 19S2.5 14.5 0 9.5C2.5 4.5 8 0 14.5 0zm0 2.8a6.7 6.7 0 100 13.4 6.7 6.7 0 000-13.4zm0 2.5a4.2 4.2 0 11-4.1 3.5 2.2 2.2 0 003-2.9c.3-.4.7-.6 1.1-.6z"/></svg>
<div style="left:4498px;top:1604.5px;width:76px;height:62px;background:#0d5191;"></div>
<svg style="left:4523px;top:1622.5px;" width="25.5" height="25.5" viewBox="0 0 26 26.5"><path fill="#fff" d="M19.5 1.2a3 3 0 014.2 0l1.6 1.6a3 3 0 010 4.2l-2 2-5.8-5.8zM16 4.7l5.8 5.8L8.3 24 .5 26l2-7.8zM4.3 19.5l-1 3.7 3.7-1z"/></svg>
<div style="left:4576px;top:1604.5px;width:73px;height:62px;background:#fa2a42;border-radius:0 9px 9px 0;"></div>
<svg style="left:4601px;top:1622.5px;" width="21.8" height="24.5" viewBox="0 0 23 27"><path fill-rule="evenodd" fill="#fff" d="M8 0h7l1 2.5h6.5V6H.5V2.5H7zM2 8h19l-1 16.5a2.5 2.5 0 01-2.5 2.5h-12A2.5 2.5 0 013 24.5zm3 2.8l.7 13.400h11.6l.7-13.400zm2.3 1.7h2.2v10H7.3zm5.2 0h2.2v10h-2.2z"/></svg>
<div style="left:770px;top:1719px;width:196px;height:43.5px;background:#a6eb3c;border-radius:7px;"></div>
<svg style="left:782px;top:1730.5px;" width="21" height="21" viewBox="0 0 21 21"><rect width="21" height="21" rx="3" fill="#000"/><path d="M10.5 4v13M4 10.5h13" stroke="#a6eb3c" stroke-width="4"/></svg>
<span class="t" style="top:1729.25px;font-size:23.5px;line-height:23.5px;color:#000;font-weight:700;transform:scaleX(0.9506);transform-origin:0 50%;left:809.5px;">Add new task</span>
<div style="left:740px;top:1926.5px;width:4120px;height:579px;background:#fff;border-radius:0 0 22px 22px;box-shadow:0 2px 3px rgba(120,140,170,.25);"></div>
<div style="left:740px;top:1816.5px;width:4120px;height:121px;background:#0e1836;border-radius:22px 22px 0 0;"></div>
<svg style="left:767px;top:1851.5px;" width="28" height="18" viewBox="0 0 28 18"><path d="M3 3l11 11L25 3" fill="none" stroke="#fff" stroke-width="5.2" stroke-linecap="round" stroke-linejoin="round"/></svg>
<span class="t" style="top:1845.75px;font-size:30.5px;line-height:30.5px;color:#fff;font-weight:700;transform:scaleX(0.9026);transform-origin:0 50%;left:812px;">Onboarding</span>
<span class="t" style="top:1888.75px;font-size:23.5px;line-height:23.5px;color:#d6d9e2;transform:scaleX(1.0031);transform-origin:0 50%;left:812px;">From</span>
<span class="t" style="top:1888.75px;font-size:23.5px;line-height:23.5px;color:#d6d9e2;font-weight:700;transform:scaleX(1.0647);transform-origin:0 50%;left:874px;">12-06-2025</span>
<span class="t" style="top:1888.75px;font-size:23.5px;line-height:23.5px;color:#d6d9e2;transform:scaleX(1.0709);transform-origin:0 50%;left:1009px;">to</span>
<span class="t" style="top:1888.75px;font-size:23.5px;line-height:23.5px;color:#d6d9e2;font-weight:700;transform:scaleX(1.0730);transform-origin:0 50%;left:1036px;">29-06-2025</span>
<span class="t" style="top:1893px;font-size:17px;line-height:17px;color:#d6d9e2;left:1180.5px;">•</span>
<span class="t" style="top:1888.75px;font-size:23.5px;line-height:23.5px;color:#d6d9e2;transform:scaleX(1.0379);transform-origin:0 50%;left:1197px;">Total tasks:</span>
<div style="left:1326px;top:1883px;width:44px;height:34.5px;background:#66738c;border:2px solid #a4adbd;border-radius:17px;"></div>
<span class="t" style="top:1891.25px;font-size:19.5px;line-height:19.5px;color:#e3e6ee;left:1348px;transform:translateX(-50%);">4</span>
<div style="left:4792px;top:1836.5px;width:40px;height:40px;background:#0d5191;border:2px solid #8fb2dc;border-radius:50%;"></div>
<div style="left:4808px;top:1844.5px;width:8px;height:8px;background:#fff;border-radius:50%;"></div>
<div style="left:4808px;top:1852.5px;width:8px;height:8px;background:#fff;border-radius:50%;"></div>
<div style="left:4808px;top:1860.5px;width:8px;height:8px;background:#fff;border-radius:50%;"></div>
<svg style="left:720px;top:1934px;" width="21" height="42" viewBox="0 0 21 42"><path d="M21 0v42L0 21z" fill="#fff"/></svg>
<div style="left:663.5px;top:1934.5px;width:41px;height:41px;background:#d9dde8;border:10.5px solid #0e1836;border-radius:50%;"></div>
<div style="left:770px;top:1965.5px;width:4059px;height:438px;border:2px solid #dfe3ea;"></div>
<div style="left:798px;top:2003.5px;width:34px;height:34px;background:#f1f2f7;border:2px solid #b8c5d8;border-radius:7px;"></div>
<div style="left:868px;top:2001.5px;width:40px;height:40px;background:#84c427;border-radius:50%;"></div>
<svg style="left:880px;top:2014px;" width="16" height="14" viewBox="0 0 16 14"><path d="M2 7l4.5 4.5L14 3" fill="none" stroke="#fff" stroke-width="4.2" stroke-linejoin="round"/></svg>
<span class="t" style="top:2005.7px;font-size:26px;line-height:26px;color:#5585f5;transform:scaleX(0.9968);transform-origin:0 50%;left:927px;">Walkthrough and demo</span>
<div style="left:1966px;top:1988px;width:120px;height:60px;background:#778899;border-radius:30px;"></div>
<svg style="left:2001px;top:2006px;" width="27" height="24" viewBox="0 0 27 24"><path d="M14 2c6.3 0 11 3.7 11 8.3s-4.7 8.3-11 8.3c-1.3 0-2.5-.2-3.6-.5-1.5 1.2-4 2.7-7.400 3.1 1.5-1.7 2.3-3.400 2.5-5C3.9 14.7 3 12.6 3 10.3 3 5.7 7.7 2 14 2z" fill="none" stroke="#fff" stroke-width="2.8"/></svg>
<span class="t" style="top:2005px;font-size:27px;line-height:27px;color:#fff;font-weight:700;left:2033.5px;-webkit-text-stroke:.5px #fff;">0</span>
<div style="left:2645.5px;top:1988.8px;width:280.5px;height:60px;background:#84c427;border-radius:30px;"></div>
<span class="t" style="top:2006.5px;font-size:26px;line-height:26px;color:#fff;transform:scaleX(0.9573);transform-origin:0 50%;left:2706px;">Done</span>
<svg style="left:2877.5px;top:2017.5px;" width="17" height="9" viewBox="0 0 17 9"><path d="M0 0h17L8.5 9z" fill="#fff"/></svg>
<div style="left:3152px;top:2005.5px;width:26px;height:26px;background:#777777;border-radius:50%;"></div>
<span class="t" style="top:2006.5px;font-size:26px;line-height:26px;color:#222;transform:scaleX(0.9774);transform-origin:0 50%;left:3191px;">28-02-2023</span>
<div style="left:3531px;top:1988px;width:240px;height:64px;background:#f0f0f0;border-radius:32px;overflow:hidden;box-shadow:inset 0 2px 3px rgba(0,0,0,.08);"></div>
<span class="t" style="top:2007px;font-size:25px;line-height:25px;color:#333;font-weight:700;transform:scaleX(0.9546);transform-origin:0 50%;left:3588px;">0%</span>
<svg style="left:4049px;top:1989px;" width="64" height="64" viewBox="0 0 64 64"><defs><clipPath id="av9"><circle cx="32" cy="32" r="30.00"/></clipPath></defs><g clip-path="url(#av9)"><rect width="64" height="64" fill="#c5c3c2"/><path d="M14 64c2-6 8-8 13-9h12c5 1 9 2 12 9z" fill="#9a5a30"/><path d="M22 50h20v12H22z" fill="#935429"/><ellipse cx="49" cy="35" rx="2.6" ry="6" fill="#9c5e36"/><path d="M17.5 30c0-10 6-17 14.5-17s15 7 15 17c0 6-1 12-3.5 17-2.5 5-7 9-11.5 9s-9-4-11.5-9c-2-5-3-11-3-17z" fill="#aa6a3e"/><path d="M21 20c3-5 18-5 22 0 1 3 1 6 0 8-6-3-16-3-22 0-1-2-1-5 0-8z" fill="#b97a4a" opacity=".7"/><path d="M16.5 32c-2-16 5-26 15.5-26 11 0 19 8 18.5 22 0 3-1 5-2 7-.5-9-2-14-5-18-6 2-17 2-23-1-2.5 3-3.5 8-4 16z" fill="#1b1310"/><path d="M21 27.5c2-1.2 5-1.2 7 0M36 27.5c2-1.2 5-1.2 7 0" stroke="#20120c" stroke-width="1.4" fill="none"/><ellipse cx="24.5" cy="31" rx="2.7" ry="1.5" fill="#2a1710"/><ellipse cx="39.5" cy="31" rx="2.7" ry="1.5" fill="#2a1710"/><path d="M29 39.5c2 1.3 4 1.3 6 0" stroke="#7d4524" stroke-width="1.4" fill="none"/><path d="M24.5 43c4 1.5 11 1.5 15 0-1 6.5-14 6.5-15 0z" fill="#7c3b2c"/><path d="M26 44c3.5 1 8.5 1 12 0-1.5 3.5-10.5 3.5-12 0z" fill="#f6f1ec"/></g><circle cx="32" cy="32" r="30.00" fill="none" stroke="#2f8fe8" stroke-width="4.00"/></svg>
<div style="left:4417px;top:1990px;width:78.8px;height:62px;background:#0d5191;border-radius:9px 0 0 9px;"></div>
<svg style="left:4442px;top:2011.5px;" width="28.2" height="18.5" viewBox="0 0 29 19"><path fill-rule="evenodd" fill="#fff" d="M14.5 0C21 0 26.5 4.5 29 9.5 26.5 14.5 21 19 14.5 19S2.5 14.5 0 9.5C2.5 4.5 8 0 14.5 0zm0 2.8a6.7 6.7 0 100 13.4 6.7 6.7 0 000-13.4zm0 2.5a4.2 4.2 0 11-4.1 3.5 2.2 2.2 0 003-2.9c.3-.4.7-.6 1.1-.6z"/></svg>
<div style="left:4498px;top:1990px;width:76px;height:62px;background:#0d5191;"></div>
<svg style="left:4523px;top:2008px;" width="25.5" height="25.5" viewBox="0 0 26 26.5"><path fill="#fff" d="M19.5 1.2a3 3 0 014.2 0l1.6 1.6a3 3 0 010 4.2l-2 2-5.8-5.8zM16 4.7l5.8 5.8L8.3 24 .5 26l2-7.8zM4.3 19.5l-1 3.7 3.7-1z"/></svg>
<div style="left:4576px;top:1990px;width:73px;height:62px;background:#fa2a42;border-radius:0 9px 9px 0;"></div>
<svg style="left:4601px;top:2008px;" width="21.8" height="24.5" viewBox="0 0 23 27"><path fill-rule="evenodd" fill="#fff" d="M8 0h7l1 2.5h6.5V6H.5V2.5H7zM2 8h19l-1 16.5a2.5 2.5 0 01-2.5 2.5h-12A2.5 2.5 0 013 24.5zm3 2.8l.7 13.400h11.6l.7-13.400zm2.3 1.7h2.2v10H7.3zm5.2 0h2.2v10h-2.2z"/></svg>
<div style="left:770px;top:2074.5px;width:4059px;height:2.5px;background:#dfe3ea;"></div>
<div style="left:798px;top:2112.5px;width:34px;height:34px;background:#f1f2f7;border:2px solid #b8c5d8;border-radius:7px;"></div>
<div style="left:868px;top:2110.5px;width:40px;height:40px;background:#84c427;border-radius:50%;"></div>
<svg style="left:880px;top:2123px;" width="16" height="14" viewBox="0 0 16 14"><path d="M2 7l4.5 4.5L14 3" fill="none" stroke="#fff" stroke-width="4.2" stroke-linejoin="round"/></svg>
<span class="t" style="top:2114.7px;font-size:26px;line-height:26px;color:#5585f5;transform:scaleX(0.9849);transform-origin:0 50%;left:927px;">Feedback call</span>
<div style="left:1966px;top:2097px;width:120px;height:60px;background:#778899;border-radius:30px;"></div>
<svg style="left:2001px;top:2115px;" width="27" height="24" viewBox="0 0 27 24"><path d="M14 2c6.3 0 11 3.7 11 8.3s-4.7 8.3-11 8.3c-1.3 0-2.5-.2-3.6-.5-1.5 1.2-4 2.7-7.400 3.1 1.5-1.7 2.3-3.400 2.5-5C3.9 14.7 3 12.6 3 10.3 3 5.7 7.7 2 14 2z" fill="none" stroke="#fff" stroke-width="2.8"/></svg>
<span class="t" style="top:2114px;font-size:27px;line-height:27px;color:#fff;font-weight:700;left:2033.5px;-webkit-text-stroke:.5px #fff;">0</span>
<div style="left:2645.5px;top:2097.8px;width:280.5px;height:60px;background:#84c427;border-radius:30px;"></div>
<span class="t" style="top:2115.5px;font-size:26px;line-height:26px;color:#fff;transform:scaleX(0.9573);transform-origin:0 50%;left:2706px;">Done</span>
<svg style="left:2877.5px;top:2126.5px;" width="17" height="9" viewBox="0 0 17 9"><path d="M0 0h17L8.5 9z" fill="#fff"/></svg>
<div style="left:3152px;top:2114.5px;width:26px;height:26px;background:#03a9f4;border-radius:50%;"></div>
<span class="t" style="top:2115.5px;font-size:26px;line-height:26px;color:#222;transform:scaleX(0.9774);transform-origin:0 50%;left:3191px;">28-02-2023</span>
<div style="left:3531px;top:2097px;width:240px;height:64px;background:#f0f0f0;border-radius:32px;overflow:hidden;box-shadow:inset 0 2px 3px rgba(0,0,0,.08);"><div style="left:0px;top:0px;width:240px;height:64px;background:#84c427;box-shadow:inset 0 -3px 1px rgba(0,0,0,.15);"></div></div>
<span class="t" style="top:2116px;font-size:25px;line-height:25px;color:#333;font-weight:700;transform:scaleX(0.9538);transform-origin:0 50%;left:3588px;">100%</span>
<svg style="left:4049px;top:2098px;" width="64" height="64" viewBox="0 0 64 64"><defs><clipPath id="av10"><circle cx="32" cy="32" r="30.00"/></clipPath></defs><g clip-path="url(#av10)"><rect width="64" height="64" fill="#c5c3c2"/><path d="M14 64c2-6 8-8 13-9h12c5 1 9 2 12 9z" fill="#9a5a30"/><path d="M22 50h20v12H22z" fill="#935429"/><ellipse cx="49" cy="35" rx="2.6" ry="6" fill="#9c5e36"/><path d="M17.5 30c0-10 6-17 14.5-17s15 7 15 17c0 6-1 12-3.5 17-2.5 5-7 9-11.5 9s-9-4-11.5-9c-2-5-3-11-3-17z" fill="#aa6a3e"/><path d="M21 20c3-5 18-5 22 0 1 3 1 6 0 8-6-3-16-3-22 0-1-2-1-5 0-8z" fill="#b97a4a" opacity=".7"/><path d="M16.5 32c-2-16 5-26 15.5-26 11 0 19 8 18.5 22 0 3-1 5-2 7-.5-9-2-14-5-18-6 2-17 2-23-1-2.5 3-3.5 8-4 16z" fill="#1b1310"/><path d="M21 27.5c2-1.2 5-1.2 7 0M36 27.5c2-1.2 5-1.2 7 0" stroke="#20120c" stroke-width="1.4" fill="none"/><ellipse cx="24.5" cy="31" rx="2.7" ry="1.5" fill="#2a1710"/><ellipse cx="39.5" cy="31" rx="2.7" ry="1.5" fill="#2a1710"/><path d="M29 39.5c2 1.3 4 1.3 6 0" stroke="#7d4524" stroke-width="1.4" fill="none"/><path d="M24.5 43c4 1.5 11 1.5 15 0-1 6.5-14 6.5-15 0z" fill="#7c3b2c"/><path d="M26 44c3.5 1 8.5 1 12 0-1.5 3.5-10.5 3.5-12 0z" fill="#f6f1ec"/></g><circle cx="32" cy="32" r="30.00" fill="none" stroke="#2f8fe8" stroke-width="4.00"/></svg>
<div style="left:4417px;top:2099px;width:78.8px;height:62px;background:#0d5191;border-radius:9px 0 0 9px;"></div>
<svg style="left:4442px;top:2120.5px;" width="28.2" height="18.5" viewBox="0 0 29 19"><path fill-rule="evenodd" fill="#fff" d="M14.5 0C21 0 26.5 4.5 29 9.5 26.5 14.5 21 19 14.5 19S2.5 14.5 0 9.5C2.5 4.5 8 0 14.5 0zm0 2.8a6.7 6.7 0 100 13.4 6.7 6.7 0 000-13.4zm0 2.5a4.2 4.2 0 11-4.1 3.5 2.2 2.2 0 003-2.9c.3-.4.7-.6 1.1-.6z"/></svg>
<div style="left:4498px;top:2099px;width:76px;height:62px;background:#0d5191;"></div>
<svg style="left:4523px;top:2117px;" width="25.5" height="25.5" viewBox="0 0 26 26.5"><path fill="#fff" d="M19.5 1.2a3 3 0 014.2 0l1.6 1.6a3 3 0 010 4.2l-2 2-5.8-5.8zM16 4.7l5.8 5.8L8.3 24 .5 26l2-7.8zM4.3 19.5l-1 3.7 3.7-1z"/></svg>
<div style="left:4576px;top:2099px;width:73px;height:62px;background:#fa2a42;border-radius:0 9px 9px 0;"></div>
<svg style="left:4601px;top:2117px;" width="21.8" height="24.5" viewBox="0 0 23 27"><path fill-rule="evenodd" fill="#fff" d="M8 0h7l1 2.5h6.5V6H.5V2.5H7zM2 8h19l-1 16.5a2.5 2.5 0 01-2.5 2.5h-12A2.5 2.5 0 013 24.5zm3 2.8l.7 13.400h11.6l.7-13.400zm2.3 1.7h2.2v10H7.3zm5.2 0h2.2v10h-2.2z"/></svg>
<div style="left:770px;top:2183.5px;width:4059px;height:2.5px;background:#dfe3ea;"></div>
<div style="left:798px;top:2221.5px;width:34px;height:34px;background:#f1f2f7;border:2px solid #b8c5d8;border-radius:7px;"></div>
<div style="left:868px;top:2219.5px;width:40px;height:40px;background:#84c427;border-radius:50%;"></div>
<svg style="left:880px;top:2232px;" width="16" height="14" viewBox="0 0 16 14"><path d="M2 7l4.5 4.5L14 3" fill="none" stroke="#fff" stroke-width="4.2" stroke-linejoin="round"/></svg>
<span class="t" style="top:2223.7px;font-size:26px;line-height:26px;color:#5585f5;transform:scaleX(1.0001);transform-origin:0 50%;left:927px;">Planning for the launch</span>
<div style="left:1966px;top:2206px;width:120px;height:60px;background:#778899;border-radius:30px;"></div>
<svg style="left:2001px;top:2224px;" width="27" height="24" viewBox="0 0 27 24"><path d="M14 2c6.3 0 11 3.7 11 8.3s-4.7 8.3-11 8.3c-1.3 0-2.5-.2-3.6-.5-1.5 1.2-4 2.7-7.400 3.1 1.5-1.7 2.3-3.400 2.5-5C3.9 14.7 3 12.6 3 10.3 3 5.7 7.7 2 14 2z" fill="none" stroke="#fff" stroke-width="2.8"/></svg>
<span class="t" style="top:2223px;font-size:27px;line-height:27px;color:#fff;font-weight:700;left:2033.5px;-webkit-text-stroke:.5px #fff;">0</span>
<div style="left:2645.5px;top:2206.8px;width:280.5px;height:60px;background:#84c427;border-radius:30px;"></div>
<span class="t" style="top:2224.5px;font-size:26px;line-height:26px;color:#fff;transform:scaleX(0.9573);transform-origin:0 50%;left:2706px;">Done</span>
<svg style="left:2877.5px;top:2235.5px;" width="17" height="9" viewBox="0 0 17 9"><path d="M0 0h17L8.5 9z" fill="#fff"/></svg>
<div style="left:3152px;top:2223.5px;width:26px;height:26px;background:#ff6f00;border-radius:50%;"></div>
<span class="t" style="top:2224.5px;font-size:26px;line-height:26px;color:#222;transform:scaleX(0.9774);transform-origin:0 50%;left:3191px;">28-02-2023</span>
<div style="left:3531px;top:2206px;width:240px;height:64px;background:#f0f0f0;border-radius:32px;overflow:hidden;box-shadow:inset 0 2px 3px rgba(0,0,0,.08);"><div style="left:0px;top:0px;width:48px;height:64px;background:#84c427;box-shadow:inset 0 -3px 1px rgba(0,0,0,.15);"></div></div>
<span class="t" style="top:2225px;font-size:25px;line-height:25px;color:#333;font-weight:700;transform:scaleX(0.9491);transform-origin:0 50%;left:3588px;">20%</span>
<svg style="left:4049px;top:2207px;" width="64" height="64" viewBox="0 0 64 64"><defs><clipPath id="av11"><circle cx="32" cy="32" r="30.00"/></clipPath></defs><g clip-path="url(#av11)"><rect width="64" height="64" fill="#c5c3c2"/><path d="M14 64c2-6 8-8 13-9h12c5 1 9 2 12 9z" fill="#9a5a30"/><path d="M22 50h20v12H22z" fill="#935429"/><ellipse cx="49" cy="35" rx="2.6" ry="6" fill="#9c5e36"/><path d="M17.5 30c0-10 6-17 14.5-17s15 7 15 17c0 6-1 12-3.5 17-2.5 5-7 9-11.5 9s-9-4-11.5-9c-2-5-3-11-3-17z" fill="#aa6a3e"/><path d="M21 20c3-5 18-5 22 0 1 3 1 6 0 8-6-3-16-3-22 0-1-2-1-5 0-8z" fill="#b97a4a" opacity=".7"/><path d="M16.5 32c-2-16 5-26 15.5-26 11 0 19 8 18.5 22 0 3-1 5-2 7-.5-9-2-14-5-18-6 2-17 2-23-1-2.5 3-3.5 8-4 16z" fill="#1b1310"/><path d="M21 27.5c2-1.2 5-1.2 7 0M36 27.5c2-1.2 5-1.2 7 0" stroke="#20120c" stroke-width="1.4" fill="none"/><ellipse cx="24.5" cy="31" rx="2.7" ry="1.5" fill="#2a1710"/><ellipse cx="39.5" cy="31" rx="2.7" ry="1.5" fill="#2a1710"/><path d="M29 39.5c2 1.3 4 1.3 6 0" stroke="#7d4524" stroke-width="1.4" fill="none"/><path d="M24.5 43c4 1.5 11 1.5 15 0-1 6.5-14 6.5-15 0z" fill="#7c3b2c"/><path d="M26 44c3.5 1 8.5 1 12 0-1.5 3.5-10.5 3.5-12 0z" fill="#f6f1ec"/></g><circle cx="32" cy="32" r="30.00" fill="none" stroke="#2f8fe8" stroke-width="4.00"/></svg>
<div style="left:4417px;top:2208px;width:78.8px;height:62px;background:#0d5191;border-radius:9px 0 0 9px;"></div>
<svg style="left:4442px;top:2229.5px;" width="28.2" height="18.5" viewBox="0 0 29 19"><path fill-rule="evenodd" fill="#fff" d="M14.5 0C21 0 26.5 4.5 29 9.5 26.5 14.5 21 19 14.5 19S2.5 14.5 0 9.5C2.5 4.5 8 0 14.5 0zm0 2.8a6.7 6.7 0 100 13.4 6.7 6.7 0 000-13.4zm0 2.5a4.2 4.2 0 11-4.1 3.5 2.2 2.2 0 003-2.9c.3-.4.7-.6 1.1-.6z"/></svg>
<div style="left:4498px;top:2208px;width:76px;height:62px;background:#0d5191;"></div>
<svg style="left:4523px;top:2226px;" width="25.5" height="25.5" viewBox="0 0 26 26.5"><path fill="#fff" d="M19.5 1.2a3 3 0 014.2 0l1.6 1.6a3 3 0 010 4.2l-2 2-5.8-5.8zM16 4.7l5.8 5.8L8.3 24 .5 26l2-7.8zM4.3 19.5l-1 3.7 3.7-1z"/></svg>
<div style="left:4576px;top:2208px;width:73px;height:62px;background:#fa2a42;border-radius:0 9px 9px 0;"></div>
<svg style="left:4601px;top:2226px;" width="21.8" height="24.5" viewBox="0 0 23 27"><path fill-rule="evenodd" fill="#fff" d="M8 0h7l1 2.5h6.5V6H.5V2.5H7zM2 8h19l-1 16.5a2.5 2.5 0 01-2.5 2.5h-12A2.5 2.5 0 013 24.5zm3 2.8l.7 13.400h11.6l.7-13.400zm2.3 1.7h2.2v10H7.3zm5.2 0h2.2v10h-2.2z"/></svg>
<div style="left:770px;top:2292.5px;width:4059px;height:2.5px;background:#dfe3ea;"></div>
<div style="left:798px;top:2330.5px;width:34px;height:34px;background:#f1f2f7;border:2px solid #b8c5d8;border-radius:7px;"></div>
<div style="left:868px;top:2328.5px;width:40px;height:40px;background:#84c427;border-radius:50%;"></div>
<svg style="left:880px;top:2341px;" width="16" height="14" viewBox="0 0 16 14"><path d="M2 7l4.5 4.5L14 3" fill="none" stroke="#fff" stroke-width="4.2" stroke-linejoin="round"/></svg>
<span class="t" style="top:2332.7px;font-size:26px;line-height:26px;color:#5585f5;transform:scaleX(0.9896);transform-origin:0 50%;left:927px;">Training</span>
<div style="left:1966px;top:2315px;width:120px;height:60px;background:#778899;border-radius:30px;"></div>
<svg style="left:2001px;top:2333px;" width="27" height="24" viewBox="0 0 27 24"><path d="M14 2c6.3 0 11 3.7 11 8.3s-4.7 8.3-11 8.3c-1.3 0-2.5-.2-3.6-.5-1.5 1.2-4 2.7-7.400 3.1 1.5-1.7 2.3-3.400 2.5-5C3.9 14.7 3 12.6 3 10.3 3 5.7 7.7 2 14 2z" fill="none" stroke="#fff" stroke-width="2.8"/></svg>
<span class="t" style="top:2332px;font-size:27px;line-height:27px;color:#fff;font-weight:700;left:2033.5px;-webkit-text-stroke:.5px #fff;">0</span>
<div style="left:2645.5px;top:2315.8px;width:280.5px;height:60px;background:#84c427;border-radius:30px;"></div>
<span class="t" style="top:2333.5px;font-size:26px;line-height:26px;color:#fff;transform:scaleX(0.9573);transform-origin:0 50%;left:2706px;">Done</span>
<svg style="left:2877.5px;top:2344.5px;" width="17" height="9" viewBox="0 0 17 9"><path d="M0 0h17L8.5 9z" fill="#fff"/></svg>
<div style="left:3152px;top:2332.5px;width:26px;height:26px;background:#03a9f4;border-radius:50%;"></div>
<span class="t" style="top:2333.5px;font-size:26px;line-height:26px;color:#222;transform:scaleX(0.9774);transform-origin:0 50%;left:3191px;">21-02-2023</span>
<div style="left:3531px;top:2315px;width:240px;height:64px;background:#f0f0f0;border-radius:32px;overflow:hidden;box-shadow:inset 0 2px 3px rgba(0,0,0,.08);"></div>
<span class="t" style="top:2334px;font-size:25px;line-height:25px;color:#333;font-weight:700;transform:scaleX(0.9546);transform-origin:0 50%;left:3588px;">0%</span>
<svg style="left:4049px;top:2316px;" width="64" height="64" viewBox="0 0 64 64"><defs><clipPath id="av12"><circle cx="32" cy="32" r="30.00"/></clipPath></defs><g clip-path="url(#av12)"><rect width="64" height="64" fill="#c5c3c2"/><path d="M14 64c2-6 8-8 13-9h12c5 1 9 2 12 9z" fill="#9a5a30"/><path d="M22 50h20v12H22z" fill="#935429"/><ellipse cx="49" cy="35" rx="2.6" ry="6" fill="#9c5e36"/><path d="M17.5 30c0-10 6-17 14.5-17s15 7 15 17c0 6-1 12-3.5 17-2.5 5-7 9-11.5 9s-9-4-11.5-9c-2-5-3-11-3-17z" fill="#aa6a3e"/><path d="M21 20c3-5 18-5 22 0 1 3 1 6 0 8-6-3-16-3-22 0-1-2-1-5 0-8z" fill="#b97a4a" opacity=".7"/><path d="M16.5 32c-2-16 5-26 15.5-26 11 0 19 8 18.5 22 0 3-1 5-2 7-.5-9-2-14-5-18-6 2-17 2-23-1-2.5 3-3.5 8-4 16z" fill="#1b1310"/><path d="M21 27.5c2-1.2 5-1.2 7 0M36 27.5c2-1.2 5-1.2 7 0" stroke="#20120c" stroke-width="1.4" fill="none"/><ellipse cx="24.5" cy="31" rx="2.7" ry="1.5" fill="#2a1710"/><ellipse cx="39.5" cy="31" rx="2.7" ry="1.5" fill="#2a1710"/><path d="M29 39.5c2 1.3 4 1.3 6 0" stroke="#7d4524" stroke-width="1.4" fill="none"/><path d="M24.5 43c4 1.5 11 1.5 15 0-1 6.5-14 6.5-15 0z" fill="#7c3b2c"/><path d="M26 44c3.5 1 8.5 1 12 0-1.5 3.5-10.5 3.5-12 0z" fill="#f6f1ec"/></g><circle cx="32" cy="32" r="30.00" fill="none" stroke="#2f8fe8" stroke-width="4.00"/></svg>
<div style="left:4417px;top:2317px;width:78.8px;height:62px;background:#0d5191;border-radius:9px 0 0 9px;"></div>
<svg style="left:4442px;top:2338.5px;" width="28.2" height="18.5" viewBox="0 0 29 19"><path fill-rule="evenodd" fill="#fff" d="M14.5 0C21 0 26.5 4.5 29 9.5 26.5 14.5 21 19 14.5 19S2.5 14.5 0 9.5C2.5 4.5 8 0 14.5 0zm0 2.8a6.7 6.7 0 100 13.4 6.7 6.7 0 000-13.4zm0 2.5a4.2 4.2 0 11-4.1 3.5 2.2 2.2 0 003-2.9c.3-.4.7-.6 1.1-.6z"/></svg>
<div style="left:4498px;top:2317px;width:76px;height:62px;background:#0d5191;"></div>
<svg style="left:4523px;top:2335px;" width="25.5" height="25.5" viewBox="0 0 26 26.5"><path fill="#fff" d="M19.5 1.2a3 3 0 014.2 0l1.6 1.6a3 3 0 010 4.2l-2 2-5.8-5.8zM16 4.7l5.8 5.8L8.3 24 .5 26l2-7.8zM4.3 19.5l-1 3.7 3.7-1z"/></svg>
<div style="left:4576px;top:2317px;width:73px;height:62px;background:#fa2a42;border-radius:0 9px 9px 0;"></div>
<svg style="left:4601px;top:2335px;" width="21.8" height="24.5" viewBox="0 0 23 27"><path fill-rule="evenodd" fill="#fff" d="M8 0h7l1 2.5h6.5V6H.5V2.5H7zM2 8h19l-1 16.5a2.5 2.5 0 01-2.5 2.5h-12A2.5 2.5 0 013 24.5zm3 2.8l.7 13.400h11.6l.7-13.400zm2.3 1.7h2.2v10H7.3zm5.2 0h2.2v10h-2.2z"/></svg>
<div style="left:770px;top:2431.5px;width:196px;height:43.5px;background:#a6eb3c;border-radius:7px;"></div>
<svg style="left:782px;top:2443px;" width="21" height="21" viewBox="0 0 21 21"><rect width="21" height="21" rx="3" fill="#000"/><path d="M10.5 4v13M4 10.5h13" stroke="#a6eb3c" stroke-width="4"/></svg>
<span class="t" style="top:2441.75px;font-size:23.5px;line-height:23.5px;color:#000;font-weight:700;transform:scaleX(0.9506);transform-origin:0 50%;left:809.5px;">Add new task</span>
<div style="left:740px;top:2639.5px;width:4120px;height:361px;background:#fff;border-radius:0 0 22px 22px;box-shadow:0 2px 3px rgba(120,140,170,.25);"></div>
<div style="left:740px;top:2529.5px;width:4120px;height:121px;background:#0e1836;border-radius:22px 22px 0 0;"></div>
<svg style="left:767px;top:2564.5px;" width="28" height="18" viewBox="0 0 28 18"><path d="M3 3l11 11L25 3" fill="none" stroke="#fff" stroke-width="5.2" stroke-linecap="round" stroke-linejoin="round"/></svg>
<span class="t" style="top:2558.75px;font-size:30.5px;line-height:30.5px;color:#fff;font-weight:700;transform:scaleX(0.9223);transform-origin:0 50%;left:812px;">Intranet Launch</span>
<span class="t" style="top:2601.75px;font-size:23.5px;line-height:23.5px;color:#d6d9e2;transform:scaleX(1.0031);transform-origin:0 50%;left:812px;">From</span>
<span class="t" style="top:2601.75px;font-size:23.5px;line-height:23.5px;color:#d6d9e2;font-weight:700;transform:scaleX(1.0647);transform-origin:0 50%;left:874px;">12-06-2025</span>
<span class="t" style="top:2601.75px;font-size:23.5px;line-height:23.5px;color:#d6d9e2;transform:scaleX(1.0709);transform-origin:0 50%;left:1009px;">to</span>
<span class="t" style="top:2601.75px;font-size:23.5px;line-height:23.5px;color:#d6d9e2;font-weight:700;transform:scaleX(1.0730);transform-origin:0 50%;left:1036px;">29-06-2025</span>
<span class="t" style="top:2606px;font-size:17px;line-height:17px;color:#d6d9e2;left:1180.5px;">•</span>
<span class="t" style="top:2601.75px;font-size:23.5px;line-height:23.5px;color:#d6d9e2;transform:scaleX(1.0379);transform-origin:0 50%;left:1197px;">Total tasks:</span>
<div style="left:1326px;top:2596px;width:44px;height:34.5px;background:#66738c;border:2px solid #a4adbd;border-radius:17px;"></div>
<span class="t" style="top:2604.25px;font-size:19.5px;line-height:19.5px;color:#e3e6ee;left:1348px;transform:translateX(-50%);">2</span>
<div style="left:4792px;top:2549.5px;width:40px;height:40px;background:#0d5191;border:2px solid #8fb2dc;border-radius:50%;"></div>
<div style="left:4808px;top:2557.5px;width:8px;height:8px;background:#fff;border-radius:50%;"></div>
<div style="left:4808px;top:2565.5px;width:8px;height:8px;background:#fff;border-radius:50%;"></div>
<div style="left:4808px;top:2573.5px;width:8px;height:8px;background:#fff;border-radius:50%;"></div>
<svg style="left:720px;top:2647px;" width="21" height="42" viewBox="0 0 21 42"><path d="M21 0v42L0 21z" fill="#fff"/></svg>
<div style="left:663.5px;top:2647.5px;width:41px;height:41px;background:#d9dde8;border:10.5px solid #0e1836;border-radius:50%;"></div>
<div style="left:770px;top:2678.5px;width:4059px;height:220px;border:2px solid #dfe3ea;"></div>
<div style="left:798px;top:2716.5px;width:34px;height:34px;background:#f1f2f7;border:2px solid #b8c5d8;border-radius:7px;"></div>
<div style="left:868px;top:2714.5px;width:40px;height:40px;background:#84c427;border-radius:50%;"></div>
<svg style="left:880px;top:2727px;" width="16" height="14" viewBox="0 0 16 14"><path d="M2 7l4.5 4.5L14 3" fill="none" stroke="#fff" stroke-width="4.2" stroke-linejoin="round"/></svg>
<span class="t" style="top:2718.7px;font-size:26px;line-height:26px;color:#5585f5;transform:scaleX(1.0107);transform-origin:0 50%;left:927px;">Soft launch to limited users</span>
<div style="left:1966px;top:2701px;width:120px;height:60px;background:#778899;border-radius:30px;"></div>
<svg style="left:2001px;top:2719px;" width="27" height="24" viewBox="0 0 27 24"><path d="M14 2c6.3 0 11 3.7 11 8.3s-4.7 8.3-11 8.3c-1.3 0-2.5-.2-3.6-.5-1.5 1.2-4 2.7-7.400 3.1 1.5-1.7 2.3-3.400 2.5-5C3.9 14.7 3 12.6 3 10.3 3 5.7 7.7 2 14 2z" fill="none" stroke="#fff" stroke-width="2.8"/></svg>
<span class="t" style="top:2718px;font-size:27px;line-height:27px;color:#fff;font-weight:700;left:2033.5px;-webkit-text-stroke:.5px #fff;">0</span>
<div style="left:2645.5px;top:2701.8px;width:280.5px;height:60px;background:#84c427;border-radius:30px;"></div>
<span class="t" style="top:2719.5px;font-size:26px;line-height:26px;color:#fff;transform:scaleX(0.9573);transform-origin:0 50%;left:2706px;">Done</span>
<svg style="left:2877.5px;top:2730.5px;" width="17" height="9" viewBox="0 0 17 9"><path d="M0 0h17L8.5 9z" fill="#fff"/></svg>
<div style="left:3152px;top:2718.5px;width:26px;height:26px;background:#03a9f4;border-radius:50%;"></div>
<span class="t" style="top:2719.5px;font-size:26px;line-height:26px;color:#222;transform:scaleX(0.9774);transform-origin:0 50%;left:3191px;">28-02-2023</span>
<div style="left:3531px;top:2701px;width:240px;height:64px;background:#f0f0f0;border-radius:32px;overflow:hidden;box-shadow:inset 0 2px 3px rgba(0,0,0,.08);"></div>
<span class="t" style="top:2720px;font-size:25px;line-height:25px;color:#333;font-weight:700;transform:scaleX(0.9546);transform-origin:0 50%;left:3588px;">0%</span>
<svg style="left:4049px;top:2702px;" width="64" height="64" viewBox="0 0 64 64"><defs><clipPath id="av13"><circle cx="32" cy="32" r="30.00"/></clipPath></defs><g clip-path="url(#av13)"><rect width="64" height="64" fill="#c5c3c2"/><path d="M14 64c2-6 8-8 13-9h12c5 1 9 2 12 9z" fill="#9a5a30"/><path d="M22 50h20v12H22z" fill="#935429"/><ellipse cx="49" cy="35" rx="2.6" ry="6" fill="#9c5e36"/><path d="M17.5 30c0-10 6-17 14.5-17s15 7 15 17c0 6-1 12-3.5 17-2.5 5-7 9-11.5 9s-9-4-11.5-9c-2-5-3-11-3-17z" fill="#aa6a3e"/><path d="M21 20c3-5 18-5 22 0 1 3 1 6 0 8-6-3-16-3-22 0-1-2-1-5 0-8z" fill="#b97a4a" opacity=".7"/><path d="M16.5 32c-2-16 5-26 15.5-26 11 0 19 8 18.5 22 0 3-1 5-2 7-.5-9-2-14-5-18-6 2-17 2-23-1-2.5 3-3.5 8-4 16z" fill="#1b1310"/><path d="M21 27.5c2-1.2 5-1.2 7 0M36 27.5c2-1.2 5-1.2 7 0" stroke="#20120c" stroke-width="1.4" fill="none"/><ellipse cx="24.5" cy="31" rx="2.7" ry="1.5" fill="#2a1710"/><ellipse cx="39.5" cy="31" rx="2.7" ry="1.5" fill="#2a1710"/><path d="M29 39.5c2 1.3 4 1.3 6 0" stroke="#7d4524" stroke-width="1.4" fill="none"/><path d="M24.5 43c4 1.5 11 1.5 15 0-1 6.5-14 6.5-15 0z" fill="#7c3b2c"/><path d="M26 44c3.5 1 8.5 1 12 0-1.5 3.5-10.5 3.5-12 0z" fill="#f6f1ec"/></g><circle cx="32" cy="32" r="30.00" fill="none" stroke="#2f8fe8" stroke-width="4.00"/></svg>
<div style="left:4417px;top:2703px;width:78.8px;height:62px;background:#0d5191;border-radius:9px 0 0 9px;"></div>
<svg style="left:4442px;top:2724.5px;" width="28.2" height="18.5" viewBox="0 0 29 19"><path fill-rule="evenodd" fill="#fff" d="M14.5 0C21 0 26.5 4.5 29 9.5 26.5 14.5 21 19 14.5 19S2.5 14.5 0 9.5C2.5 4.5 8 0 14.5 0zm0 2.8a6.7 6.7 0 100 13.4 6.7 6.7 0 000-13.4zm0 2.5a4.2 4.2 0 11-4.1 3.5 2.2 2.2 0 003-2.9c.3-.4.7-.6 1.1-.6z"/></svg>
<div style="left:4498px;top:2703px;width:76px;height:62px;background:#0d5191;"></div>
<svg style="left:4523px;top:2721px;" width="25.5" height="25.5" viewBox="0 0 26 26.5"><path fill="#fff" d="M19.5 1.2a3 3 0 014.2 0l1.6 1.6a3 3 0 010 4.2l-2 2-5.8-5.8zM16 4.7l5.8 5.8L8.3 24 .5 26l2-7.8zM4.3 19.5l-1 3.7 3.7-1z"/></svg>
<div style="left:4576px;top:2703px;width:73px;height:62px;background:#fa2a42;border-radius:0 9px 9px 0;"></div>
<svg style="left:4601px;top:2721px;" width="21.8" height="24.5" viewBox="0 0 23 27"><path fill-rule="evenodd" fill="#fff" d="M8 0h7l1 2.5h6.5V6H.5V2.5H7zM2 8h19l-1 16.5a2.5 2.5 0 01-2.5 2.5h-12A2.5 2.5 0 013 24.5zm3 2.8l.7 13.400h11.6l.7-13.400zm2.3 1.7h2.2v10H7.3zm5.2 0h2.2v10h-2.2z"/></svg>
<div style="left:770px;top:2787.5px;width:4059px;height:2.5px;background:#dfe3ea;"></div>
<div style="left:798px;top:2825.5px;width:34px;height:34px;background:#f1f2f7;border:2px solid #b8c5d8;border-radius:7px;"></div>
<div style="left:868px;top:2823.5px;width:40px;height:40px;background:#84c427;border-radius:50%;"></div>
<svg style="left:880px;top:2836px;" width="16" height="14" viewBox="0 0 16 14"><path d="M2 7l4.5 4.5L14 3" fill="none" stroke="#fff" stroke-width="4.2" stroke-linejoin="round"/></svg>
<span class="t" style="top:2827.7px;font-size:26px;line-height:26px;color:#5585f5;left:927px;">x</span>
<div style="left:1966px;top:2810px;width:120px;height:60px;background:#778899;border-radius:30px;"></div>
<svg style="left:2001px;top:2828px;" width="27" height="24" viewBox="0 0 27 24"><path d="M14 2c6.3 0 11 3.7 11 8.3s-4.7 8.3-11 8.3c-1.3 0-2.5-.2-3.6-.5-1.5 1.2-4 2.7-7.400 3.1 1.5-1.7 2.3-3.400 2.5-5C3.9 14.7 3 12.6 3 10.3 3 5.7 7.7 2 14 2z" fill="none" stroke="#fff" stroke-width="2.8"/></svg>
<span class="t" style="top:2827px;font-size:27px;line-height:27px;color:#fff;font-weight:700;left:2033.5px;-webkit-text-stroke:.5px #fff;">0</span>
<div style="left:2645.5px;top:2810.8px;width:280.5px;height:60px;background:#84c427;border-radius:30px;"></div>
<span class="t" style="top:2828.5px;font-size:26px;line-height:26px;color:#fff;transform:scaleX(0.9573);transform-origin:0 50%;left:2706px;">Done</span>
<svg style="left:2877.5px;top:2839.5px;" width="17" height="9" viewBox="0 0 17 9"><path d="M0 0h17L8.5 9z" fill="#fff"/></svg>
<div style="left:3152px;top:2827.5px;width:26px;height:26px;background:#03a9f4;border-radius:50%;"></div>
<span class="t" style="top:2828.5px;font-size:26px;line-height:26px;color:#222;transform:scaleX(0.9774);transform-origin:0 50%;left:3191px;">28-02-2023</span>
<div style="left:3531px;top:2810px;width:240px;height:64px;background:#f0f0f0;border-radius:32px;overflow:hidden;box-shadow:inset 0 2px 3px rgba(0,0,0,.08);"></div>
<span class="t" style="top:2829px;font-size:25px;line-height:25px;color:#333;font-weight:700;transform:scaleX(0.9546);transform-origin:0 50%;left:3588px;">0%</span>
<svg style="left:4049px;top:2811px;" width="64" height="64" viewBox="0 0 64 64"><defs><clipPath id="av14"><circle cx="32" cy="32" r="30.00"/></clipPath></defs><g clip-path="url(#av14)"><rect width="64" height="64" fill="#c5c3c2"/><path d="M14 64c2-6 8-8 13-9h12c5 1 9 2 12 9z" fill="#9a5a30"/><path d="M22 50h20v12H22z" fill="#935429"/><ellipse cx="49" cy="35" rx="2.6" ry="6" fill="#9c5e36"/><path d="M17.5 30c0-10 6-17 14.5-17s15 7 15 17c0 6-1 12-3.5 17-2.5 5-7 9-11.5 9s-9-4-11.5-9c-2-5-3-11-3-17z" fill="#aa6a3e"/><path d="M21 20c3-5 18-5 22 0 1 3 1 6 0 8-6-3-16-3-22 0-1-2-1-5 0-8z" fill="#b97a4a" opacity=".7"/><path d="M16.5 32c-2-16 5-26 15.5-26 11 0 19 8 18.5 22 0 3-1 5-2 7-.5-9-2-14-5-18-6 2-17 2-23-1-2.5 3-3.5 8-4 16z" fill="#1b1310"/><path d="M21 27.5c2-1.2 5-1.2 7 0M36 27.5c2-1.2 5-1.2 7 0" stroke="#20120c" stroke-width="1.4" fill="none"/><ellipse cx="24.5" cy="31" rx="2.7" ry="1.5" fill="#2a1710"/><ellipse cx="39.5" cy="31" rx="2.7" ry="1.5" fill="#2a1710"/><path d="M29 39.5c2 1.3 4 1.3 6 0" stroke="#7d4524" stroke-width="1.4" fill="none"/><path d="M24.5 43c4 1.5 11 1.5 15 0-1 6.5-14 6.5-15 0z" fill="#7c3b2c"/><path d="M26 44c3.5 1 8.5 1 12 0-1.5 3.5-10.5 3.5-12 0z" fill="#f6f1ec"/></g><circle cx="32" cy="32" r="30.00" fill="none" stroke="#2f8fe8" stroke-width="4.00"/></svg>
<div style="left:4417px;top:2812px;width:78.8px;height:62px;background:#0d5191;border-radius:9px 0 0 9px;"></div>
<svg style="left:4442px;top:2833.5px;" width="28.2" height="18.5" viewBox="0 0 29 19"><path fill-rule="evenodd" fill="#fff" d="M14.5 0C21 0 26.5 4.5 29 9.5 26.5 14.5 21 19 14.5 19S2.5 14.5 0 9.5C2.5 4.5 8 0 14.5 0zm0 2.8a6.7 6.7 0 100 13.4 6.7 6.7 0 000-13.4zm0 2.5a4.2 4.2 0 11-4.1 3.5 2.2 2.2 0 003-2.9c.3-.4.7-.6 1.1-.6z"/></svg>
<div style="left:4498px;top:2812px;width:76px;height:62px;background:#0d5191;"></div>
<svg style="left:4523px;top:2830px;" width="25.5" height="25.5" viewBox="0 0 26 26.5"><path fill="#fff" d="M19.5 1.2a3 3 0 014.2 0l1.6 1.6a3 3 0 010 4.2l-2 2-5.8-5.8zM16 4.7l5.8 5.8L8.3 24 .5 26l2-7.8zM4.3 19.5l-1 3.7 3.7-1z"/></svg>
<div style="left:4576px;top:2812px;width:73px;height:62px;background:#fa2a42;border-radius:0 9px 9px 0;"></div>
<svg style="left:4601px;top:2830px;" width="21.8" height="24.5" viewBox="0 0 23 27"><path fill-rule="evenodd" fill="#fff" d="M8 0h7l1 2.5h6.5V6H.5V2.5H7zM2 8h19l-1 16.5a2.5 2.5 0 01-2.5 2.5h-12A2.5 2.5 0 013 24.5zm3 2.8l.7 13.400h11.6l.7-13.400zm2.3 1.7h2.2v10H7.3zm5.2 0h2.2v10h-2.2z"/></svg>
<div style="left:770px;top:2926.5px;width:196px;height:43.5px;background:#a6eb3c;border-radius:7px;"></div>
<svg style="left:782px;top:2938px;" width="21" height="21" viewBox="0 0 21 21"><rect width="21" height="21" rx="3" fill="#000"/><path d="M10.5 4v13M4 10.5h13" stroke="#a6eb3c" stroke-width="4"/></svg>
<span class="t" style="top:2936.75px;font-size:23.5px;line-height:23.5px;color:#000;font-weight:700;transform:scaleX(0.9506);transform-origin:0 50%;left:809.5px;">Add new task</span>
<div style="left:4838px;top:2280px;width:112px;height:112px;background:#0d5191;border-radius:50%;box-shadow:0 6px 14px rgba(0,0,0,.35);"></div>
<svg style="left:4878px;top:2320px;" width="32" height="32" viewBox="0 0 32 32"><path d="M16 1v30M1 16h30" stroke="#fff" stroke-width="7.4"/></svg>
</div>
<script>
(function(){var w=window.innerWidth,d=window.devicePixelRatio||1;if(d>1&&w<5000&&w>0){var k=w/5000,r=document.getElementById('root');r.style.transform='scale('+k+')';var h=document.documentElement,b=document.body;h.style.width=b.style.width=(5000*k)+'px';h.style.height=b.style.height=(2800*k)+'px';h.style.overflow='hidden';}})();
</script>
</body></html>
